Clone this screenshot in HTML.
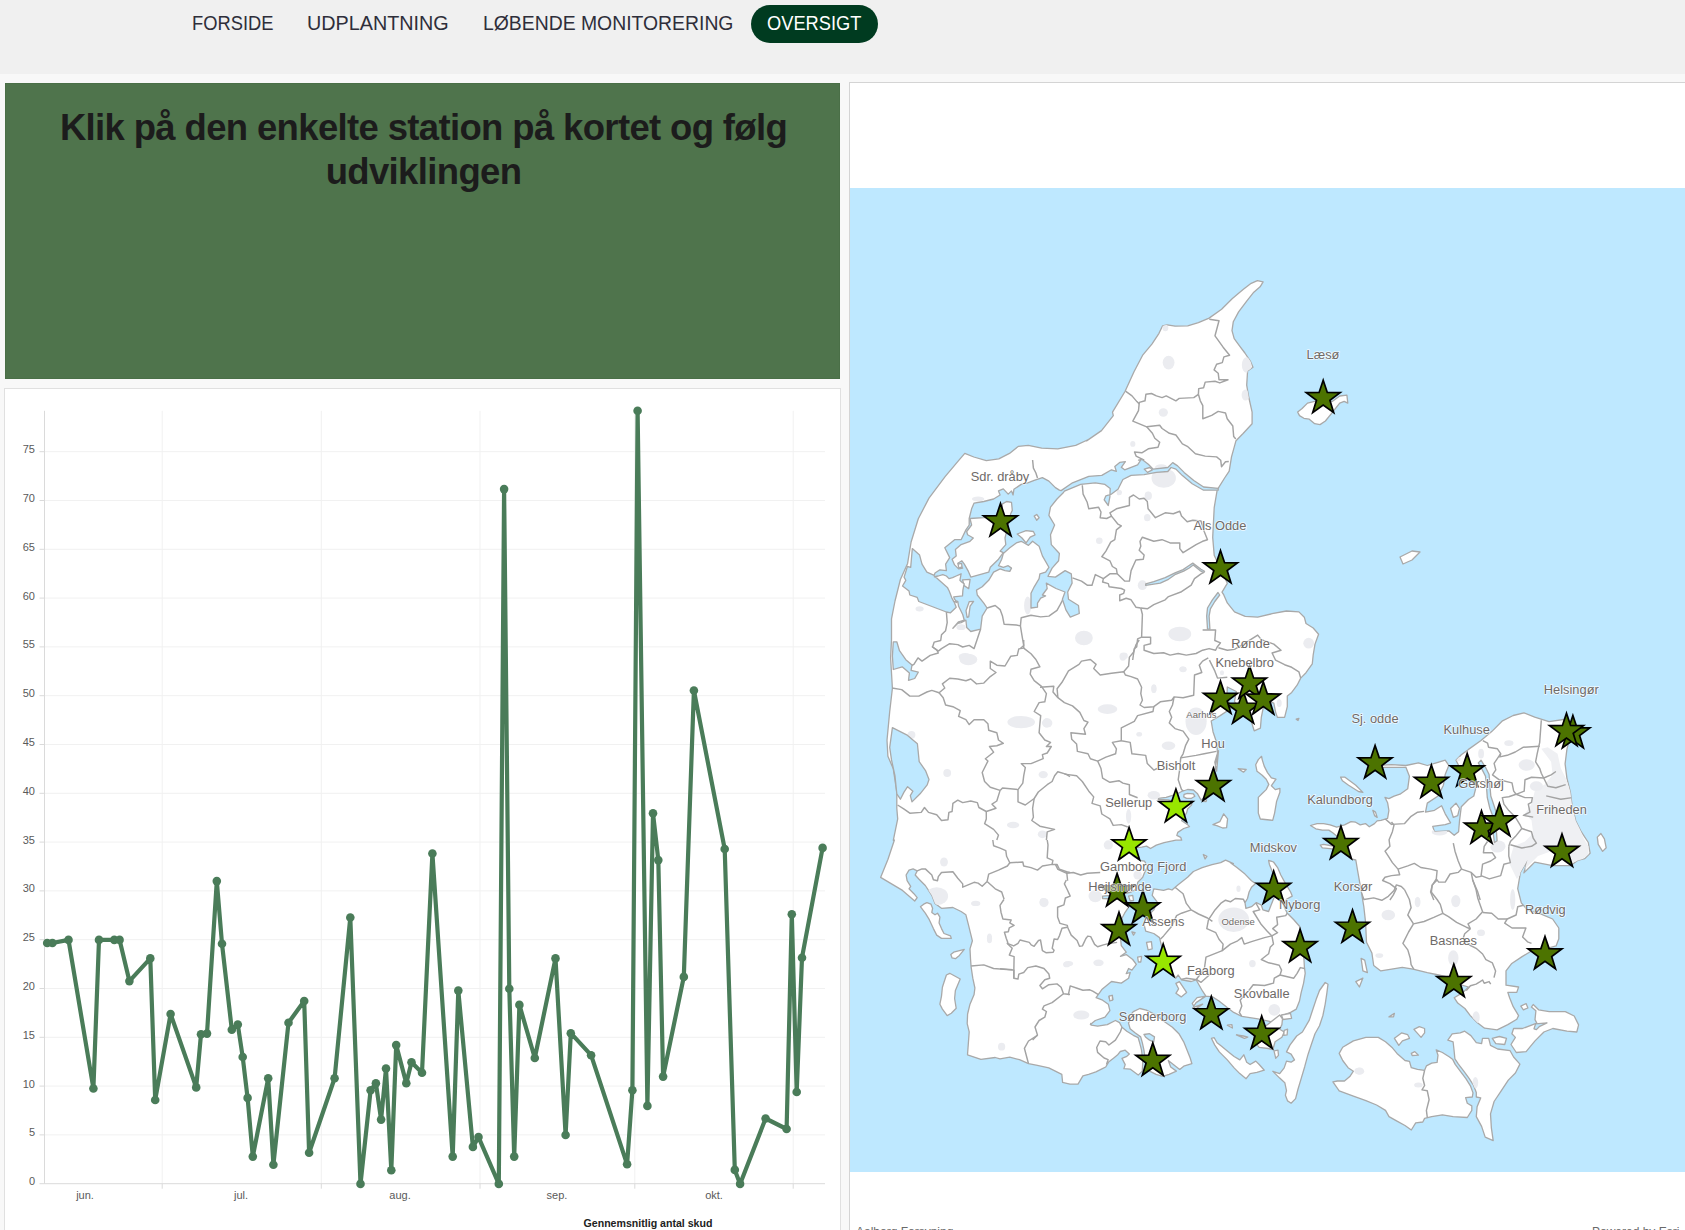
<!DOCTYPE html><html lang="da"><head><meta charset="utf-8"><title>Oversigt</title><style>
html,body{margin:0;padding:0}
body{width:1685px;height:1230px;overflow:hidden;background:#f8f8f8;font-family:"Liberation Sans",sans-serif;position:relative}
.hdr{position:absolute;left:0;top:0;width:1685px;height:74px;background:#f0f0f0}
.nav{position:absolute;top:5px;height:38px;line-height:35px;font-size:20.5px;color:#2e2e3a;white-space:nowrap}
.nav span{display:inline-block;transform-origin:0 50%}
.nav.act{background:#003b20;color:#fff;border-radius:19px}
.green{position:absolute;left:5px;top:83px;width:835px;height:296px;background:#4f744c;box-sizing:border-box;border:1px solid #4a6f47}
.green h1{margin:0;position:absolute;left:0;top:22px;width:835px;text-align:center;font-size:36.5px;line-height:44px;font-weight:bold;color:#1c1c1c;letter-spacing:-0.65px}
.cpanel{position:absolute;left:4px;top:388px;width:837px;height:860px;background:#fff;border:1px solid #e0e0e0;box-sizing:border-box;overflow:hidden}
.mpanel{position:absolute;left:849px;top:82px;width:850px;height:1170px;background:#fff;border:1px solid #d4d4d4;box-sizing:border-box;overflow:hidden}
.ax{font-size:11px;fill:#5a5a5a;font-family:"Liberation Sans",sans-serif}
.leg{font-size:10.6px;font-weight:bold;fill:#222;font-family:"Liberation Sans",sans-serif}
.ml{font-size:12.85px;fill:#6e6a68;font-family:"Liberation Sans",sans-serif;stroke:#fff;stroke-width:1.6px;stroke-opacity:.75;paint-order:stroke;stroke-linejoin:round}
.ms{font-size:9.5px;fill:#6e6a68;font-family:"Liberation Sans",sans-serif;stroke:#fff;stroke-width:1.4px;stroke-opacity:.7;paint-order:stroke;stroke-linejoin:round}
.foot{position:absolute;top:1142px;font-size:12px;color:#6a6a6a;white-space:nowrap}
</style></head><body>
<div class="hdr">
<div class="nav" style="left:191.5px"><span style="transform:scaleX(0.895)">FORSIDE</span></div>
<div class="nav" style="left:307px"><span style="transform:scaleX(0.964)">UDPLANTNING</span></div>
<div class="nav" style="left:483px"><span style="transform:scaleX(0.945)">LØBENDE MONITORERING</span></div>
<div class="nav act" style="left:751px;width:127px"><span style="transform:scaleX(0.891);margin-left:16.4px">OVERSIGT</span></div>
</div>
<div class="green"><h1>Klik på den enkelte station på kortet og følg<br>udviklingen</h1></div>
<div class="cpanel"><svg class="chart" width="835" height="842" viewBox="5 389 835 842" style="position:absolute;left:0;top:0"><line x1="44.5" y1="1134.9" x2="825" y2="1134.9" stroke="#f1f1f1" stroke-width="1"/>
<line x1="44.5" y1="1086.1" x2="825" y2="1086.1" stroke="#f1f1f1" stroke-width="1"/>
<line x1="44.5" y1="1037.3" x2="825" y2="1037.3" stroke="#f1f1f1" stroke-width="1"/>
<line x1="44.5" y1="988.5" x2="825" y2="988.5" stroke="#f1f1f1" stroke-width="1"/>
<line x1="44.5" y1="939.7" x2="825" y2="939.7" stroke="#f1f1f1" stroke-width="1"/>
<line x1="44.5" y1="890.9" x2="825" y2="890.9" stroke="#f1f1f1" stroke-width="1"/>
<line x1="44.5" y1="842.1" x2="825" y2="842.1" stroke="#f1f1f1" stroke-width="1"/>
<line x1="44.5" y1="793.3" x2="825" y2="793.3" stroke="#f1f1f1" stroke-width="1"/>
<line x1="44.5" y1="744.5" x2="825" y2="744.5" stroke="#f1f1f1" stroke-width="1"/>
<line x1="44.5" y1="695.7" x2="825" y2="695.7" stroke="#f1f1f1" stroke-width="1"/>
<line x1="44.5" y1="646.9" x2="825" y2="646.9" stroke="#f1f1f1" stroke-width="1"/>
<line x1="44.5" y1="598.1" x2="825" y2="598.1" stroke="#f1f1f1" stroke-width="1"/>
<line x1="44.5" y1="549.3" x2="825" y2="549.3" stroke="#f1f1f1" stroke-width="1"/>
<line x1="44.5" y1="500.5" x2="825" y2="500.5" stroke="#f1f1f1" stroke-width="1"/>
<line x1="44.5" y1="451.7" x2="825" y2="451.7" stroke="#f1f1f1" stroke-width="1"/>
<line x1="162.2" y1="410.8" x2="162.2" y2="1183.7" stroke="#f1f1f1" stroke-width="1"/>
<line x1="162.2" y1="1183.7" x2="162.2" y2="1188.7" stroke="#dadada" stroke-width="1"/>
<line x1="321.3" y1="410.8" x2="321.3" y2="1183.7" stroke="#f1f1f1" stroke-width="1"/>
<line x1="321.3" y1="1183.7" x2="321.3" y2="1188.7" stroke="#dadada" stroke-width="1"/>
<line x1="480" y1="410.8" x2="480" y2="1183.7" stroke="#f1f1f1" stroke-width="1"/>
<line x1="480" y1="1183.7" x2="480" y2="1188.7" stroke="#dadada" stroke-width="1"/>
<line x1="634.8" y1="410.8" x2="634.8" y2="1183.7" stroke="#f1f1f1" stroke-width="1"/>
<line x1="634.8" y1="1183.7" x2="634.8" y2="1188.7" stroke="#dadada" stroke-width="1"/>
<line x1="793.2" y1="410.8" x2="793.2" y2="1183.7" stroke="#f1f1f1" stroke-width="1"/>
<line x1="793.2" y1="1183.7" x2="793.2" y2="1188.7" stroke="#dadada" stroke-width="1"/>
<line x1="44.5" y1="410.8" x2="44.5" y2="1183.7" stroke="#dadada" stroke-width="1"/>
<line x1="44.5" y1="1183.7" x2="825" y2="1183.7" stroke="#dadada" stroke-width="1"/>
<line x1="39.5" y1="1183.7" x2="44.5" y2="1183.7" stroke="#dadada" stroke-width="1"/>
<text x="35" y="1185.2" text-anchor="end" class="ax">0</text>
<line x1="39.5" y1="1134.9" x2="44.5" y2="1134.9" stroke="#dadada" stroke-width="1"/>
<text x="35" y="1136.4" text-anchor="end" class="ax">5</text>
<line x1="39.5" y1="1086.1" x2="44.5" y2="1086.1" stroke="#dadada" stroke-width="1"/>
<text x="35" y="1087.6" text-anchor="end" class="ax">10</text>
<line x1="39.5" y1="1037.3" x2="44.5" y2="1037.3" stroke="#dadada" stroke-width="1"/>
<text x="35" y="1038.8" text-anchor="end" class="ax">15</text>
<line x1="39.5" y1="988.5" x2="44.5" y2="988.5" stroke="#dadada" stroke-width="1"/>
<text x="35" y="990.0" text-anchor="end" class="ax">20</text>
<line x1="39.5" y1="939.7" x2="44.5" y2="939.7" stroke="#dadada" stroke-width="1"/>
<text x="35" y="941.2" text-anchor="end" class="ax">25</text>
<line x1="39.5" y1="890.9" x2="44.5" y2="890.9" stroke="#dadada" stroke-width="1"/>
<text x="35" y="892.4" text-anchor="end" class="ax">30</text>
<line x1="39.5" y1="842.1" x2="44.5" y2="842.1" stroke="#dadada" stroke-width="1"/>
<text x="35" y="843.6" text-anchor="end" class="ax">35</text>
<line x1="39.5" y1="793.3" x2="44.5" y2="793.3" stroke="#dadada" stroke-width="1"/>
<text x="35" y="794.8" text-anchor="end" class="ax">40</text>
<line x1="39.5" y1="744.5" x2="44.5" y2="744.5" stroke="#dadada" stroke-width="1"/>
<text x="35" y="746.0" text-anchor="end" class="ax">45</text>
<line x1="39.5" y1="695.7" x2="44.5" y2="695.7" stroke="#dadada" stroke-width="1"/>
<text x="35" y="697.2" text-anchor="end" class="ax">50</text>
<line x1="39.5" y1="646.9" x2="44.5" y2="646.9" stroke="#dadada" stroke-width="1"/>
<text x="35" y="648.4" text-anchor="end" class="ax">55</text>
<line x1="39.5" y1="598.1" x2="44.5" y2="598.1" stroke="#dadada" stroke-width="1"/>
<text x="35" y="599.6" text-anchor="end" class="ax">60</text>
<line x1="39.5" y1="549.3" x2="44.5" y2="549.3" stroke="#dadada" stroke-width="1"/>
<text x="35" y="550.8" text-anchor="end" class="ax">65</text>
<line x1="39.5" y1="500.5" x2="44.5" y2="500.5" stroke="#dadada" stroke-width="1"/>
<text x="35" y="502.0" text-anchor="end" class="ax">70</text>
<line x1="39.5" y1="451.7" x2="44.5" y2="451.7" stroke="#dadada" stroke-width="1"/>
<text x="35" y="453.2" text-anchor="end" class="ax">75</text>
<text x="85" y="1198.5" text-anchor="middle" class="ax">jun.</text>
<text x="241" y="1198.5" text-anchor="middle" class="ax">jul.</text>
<text x="400" y="1198.5" text-anchor="middle" class="ax">aug.</text>
<text x="557" y="1198.5" text-anchor="middle" class="ax">sep.</text>
<text x="714" y="1198.5" text-anchor="middle" class="ax">okt.</text>
<path d="M47.2,943.0 L52.4,943.0 L68.5,939.9 L93.4,1088.5 L99.0,939.9 L114.3,939.9 L119.6,939.9 L129.4,981.1 L150.3,958.4 L155.2,1100.0 L170.6,1014.0 L196.2,1087.4 L201.0,1034.3 L207.0,1033.6 L216.8,881.1 L222.0,943.7 L231.8,1029.7 L237.8,1024.5 L242.7,1057.0 L247.6,1097.9 L252.8,1156.6 L268.2,1078.3 L273.4,1164.7 L288.5,1022.7 L304.2,1001.0 L309.1,1152.8 L334.6,1078.3 L350.3,917.5 L360.5,1183.9 L370.6,1090.2 L375.9,1083.2 L381.1,1119.6 L386.0,1068.5 L391.3,1170.3 L396.2,1045.1 L406.3,1083.2 L411.5,1062.2 L422.0,1072.7 L432.4,853.5 L452.7,1156.6 L458.3,990.6 L472.9,1146.9 L478.5,1137.1 L498.8,1183.9 L504.1,489.1 L509.3,988.8 L514.2,1156.6 L519.4,1004.9 L534.8,1058.0 L555.5,958.4 L565.6,1135.0 L570.8,1033.2 L591.1,1055.2 L627.1,1164.3 L632.4,1090.2 L637.6,410.8 L647.4,1105.9 L653.0,813.3 L658.3,860.1 L663.1,1076.6 L683.8,976.9 L693.9,690.5 L724.7,849.0 L734.8,1169.9 L740.1,1183.9 L765.6,1118.5 L786.6,1129.0 L791.8,914.3 L796.7,1092.0 L802.0,957.7 L822.6,847.9" fill="none" stroke="#4a7c59" stroke-width="4.2" stroke-linejoin="round" stroke-linecap="round"/>
<circle cx="47.2" cy="943.0" r="4.3" fill="#4a7c59"/>
<circle cx="52.4" cy="943.0" r="4.3" fill="#4a7c59"/>
<circle cx="68.5" cy="939.9" r="4.3" fill="#4a7c59"/>
<circle cx="93.4" cy="1088.5" r="4.3" fill="#4a7c59"/>
<circle cx="99.0" cy="939.9" r="4.3" fill="#4a7c59"/>
<circle cx="114.3" cy="939.9" r="4.3" fill="#4a7c59"/>
<circle cx="119.6" cy="939.9" r="4.3" fill="#4a7c59"/>
<circle cx="129.4" cy="981.1" r="4.3" fill="#4a7c59"/>
<circle cx="150.3" cy="958.4" r="4.3" fill="#4a7c59"/>
<circle cx="155.2" cy="1100.0" r="4.3" fill="#4a7c59"/>
<circle cx="170.6" cy="1014.0" r="4.3" fill="#4a7c59"/>
<circle cx="196.2" cy="1087.4" r="4.3" fill="#4a7c59"/>
<circle cx="201.0" cy="1034.3" r="4.3" fill="#4a7c59"/>
<circle cx="207.0" cy="1033.6" r="4.3" fill="#4a7c59"/>
<circle cx="216.8" cy="881.1" r="4.3" fill="#4a7c59"/>
<circle cx="222.0" cy="943.7" r="4.3" fill="#4a7c59"/>
<circle cx="231.8" cy="1029.7" r="4.3" fill="#4a7c59"/>
<circle cx="237.8" cy="1024.5" r="4.3" fill="#4a7c59"/>
<circle cx="242.7" cy="1057.0" r="4.3" fill="#4a7c59"/>
<circle cx="247.6" cy="1097.9" r="4.3" fill="#4a7c59"/>
<circle cx="252.8" cy="1156.6" r="4.3" fill="#4a7c59"/>
<circle cx="268.2" cy="1078.3" r="4.3" fill="#4a7c59"/>
<circle cx="273.4" cy="1164.7" r="4.3" fill="#4a7c59"/>
<circle cx="288.5" cy="1022.7" r="4.3" fill="#4a7c59"/>
<circle cx="304.2" cy="1001.0" r="4.3" fill="#4a7c59"/>
<circle cx="309.1" cy="1152.8" r="4.3" fill="#4a7c59"/>
<circle cx="334.6" cy="1078.3" r="4.3" fill="#4a7c59"/>
<circle cx="350.3" cy="917.5" r="4.3" fill="#4a7c59"/>
<circle cx="360.5" cy="1183.9" r="4.3" fill="#4a7c59"/>
<circle cx="370.6" cy="1090.2" r="4.3" fill="#4a7c59"/>
<circle cx="375.9" cy="1083.2" r="4.3" fill="#4a7c59"/>
<circle cx="381.1" cy="1119.6" r="4.3" fill="#4a7c59"/>
<circle cx="386.0" cy="1068.5" r="4.3" fill="#4a7c59"/>
<circle cx="391.3" cy="1170.3" r="4.3" fill="#4a7c59"/>
<circle cx="396.2" cy="1045.1" r="4.3" fill="#4a7c59"/>
<circle cx="406.3" cy="1083.2" r="4.3" fill="#4a7c59"/>
<circle cx="411.5" cy="1062.2" r="4.3" fill="#4a7c59"/>
<circle cx="422.0" cy="1072.7" r="4.3" fill="#4a7c59"/>
<circle cx="432.4" cy="853.5" r="4.3" fill="#4a7c59"/>
<circle cx="452.7" cy="1156.6" r="4.3" fill="#4a7c59"/>
<circle cx="458.3" cy="990.6" r="4.3" fill="#4a7c59"/>
<circle cx="472.9" cy="1146.9" r="4.3" fill="#4a7c59"/>
<circle cx="478.5" cy="1137.1" r="4.3" fill="#4a7c59"/>
<circle cx="498.8" cy="1183.9" r="4.3" fill="#4a7c59"/>
<circle cx="504.1" cy="489.1" r="4.3" fill="#4a7c59"/>
<circle cx="509.3" cy="988.8" r="4.3" fill="#4a7c59"/>
<circle cx="514.2" cy="1156.6" r="4.3" fill="#4a7c59"/>
<circle cx="519.4" cy="1004.9" r="4.3" fill="#4a7c59"/>
<circle cx="534.8" cy="1058.0" r="4.3" fill="#4a7c59"/>
<circle cx="555.5" cy="958.4" r="4.3" fill="#4a7c59"/>
<circle cx="565.6" cy="1135.0" r="4.3" fill="#4a7c59"/>
<circle cx="570.8" cy="1033.2" r="4.3" fill="#4a7c59"/>
<circle cx="591.1" cy="1055.2" r="4.3" fill="#4a7c59"/>
<circle cx="627.1" cy="1164.3" r="4.3" fill="#4a7c59"/>
<circle cx="632.4" cy="1090.2" r="4.3" fill="#4a7c59"/>
<circle cx="637.6" cy="410.8" r="4.3" fill="#4a7c59"/>
<circle cx="647.4" cy="1105.9" r="4.3" fill="#4a7c59"/>
<circle cx="653.0" cy="813.3" r="4.3" fill="#4a7c59"/>
<circle cx="658.3" cy="860.1" r="4.3" fill="#4a7c59"/>
<circle cx="663.1" cy="1076.6" r="4.3" fill="#4a7c59"/>
<circle cx="683.8" cy="976.9" r="4.3" fill="#4a7c59"/>
<circle cx="693.9" cy="690.5" r="4.3" fill="#4a7c59"/>
<circle cx="724.7" cy="849.0" r="4.3" fill="#4a7c59"/>
<circle cx="734.8" cy="1169.9" r="4.3" fill="#4a7c59"/>
<circle cx="740.1" cy="1183.9" r="4.3" fill="#4a7c59"/>
<circle cx="765.6" cy="1118.5" r="4.3" fill="#4a7c59"/>
<circle cx="786.6" cy="1129.0" r="4.3" fill="#4a7c59"/>
<circle cx="791.8" cy="914.3" r="4.3" fill="#4a7c59"/>
<circle cx="796.7" cy="1092.0" r="4.3" fill="#4a7c59"/>
<circle cx="802.0" cy="957.7" r="4.3" fill="#4a7c59"/>
<circle cx="822.6" cy="847.9" r="4.3" fill="#4a7c59"/>
<text x="648" y="1227" text-anchor="middle" class="leg">Gennemsnitlig antal skud</text></svg></div>
<div class="mpanel"><svg class="map" width="835" height="984" viewBox="850 188 835 984" style="position:absolute;left:0;top:105px"><rect x="850" y="188" width="835" height="984" fill="#bee8ff"/>
<defs><clipPath id="landclip">
<path d="M1263.1,281.8 L1260.1,286.8 L1253.8,292.2 L1246.7,301.1 L1238.6,311.9 L1233.3,321.7 L1232.0,330.7 L1234.2,338.7 L1239.5,345.9 L1244.9,353.0 L1250.3,361.1 L1253.0,367.3 L1247.6,370.9 L1246.7,385.2 L1248.5,396.0 L1252.1,412.1 L1252.1,423.7 L1243.1,433.5 L1236.0,440.7 L1231.5,456.8 L1229.2,471.1 L1224.6,478.0 L1217.2,489.9 L1214.2,507.7 L1212.7,537.4 L1214.2,555.2 L1227.3,583.3 L1222.0,592.2 L1223.8,594.9 L1227.3,602.9 L1234.5,611.9 L1245.2,616.4 L1257.7,617.2 L1272.1,613.7 L1286.4,611.0 L1298.9,611.9 L1304.3,617.2 L1306.0,623.5 L1313.2,628.0 L1318.6,634.2 L1315.0,644.1 L1313.2,654.8 L1312.3,663.8 L1306.0,672.7 L1300.7,678.1 L1297.1,685.2 L1291.7,692.4 L1287.3,696.0 L1287.3,706.7 L1284.6,717.4 L1277.4,717.4 L1275.6,712.1 L1273.8,703.1 L1268.5,701.3 L1263.1,708.5 L1261.3,717.4 L1260.4,728.2 L1254.2,730.8 L1250.6,719.2 L1245.2,712.1 L1238.1,708.5 L1234.5,701.3 L1236.3,691.5 L1227.3,687.0 L1227.0,696.0 L1230.9,708.5 L1220.2,715.6 L1211.2,721.0 L1213.0,731.7 L1216.6,742.5 L1217.5,753.2 L1214.8,762.1 L1216.6,771.1 L1218.5,750.7 L1215.8,763.3 L1213.1,779.4 L1206.0,795.5 L1201.2,800.2 L1197.3,793.4 L1193.4,790.0 L1187.6,789.5 L1181.7,791.5 L1175.9,794.4 L1166.1,797.3 L1158.3,798.3 L1158.3,799.5 L1168.0,799.8 L1177.8,802.2 L1187.6,802.2 L1192.4,801.2 L1191.5,805.1 L1187.6,809.0 L1186.6,812.9 L1181.7,820.7 L1187.6,824.6 L1189.5,826.6 L1183.7,828.5 L1177.8,832.4 L1176.8,835.4 L1180.7,837.3 L1181.7,840.2 L1175.9,840.2 L1164.1,842.7 L1156.3,845.1 L1150.5,848.5 L1146.6,846.1 L1141.7,847.1 L1132.9,848.0 L1129.0,851.0 L1132.9,855.9 L1140.7,860.7 L1144.6,861.2 L1147.6,866.6 L1144.6,872.4 L1142.7,877.3 L1137.8,882.2 L1136.8,887.1 L1136.7,888.8 L1131.1,892.0 L1121.3,894.5 L1111.5,895.3 L1102.6,896.1 L1102.6,898.5 L1111.5,898.9 L1121.3,899.7 L1128.6,902.6 L1131.1,904.2 L1127.8,908.3 L1124.6,913.2 L1122.1,918.0 L1119.7,927.8 L1120.5,937.6 L1121.3,945.7 L1126.2,952.2 L1120.5,956.3 L1126.2,954.6 L1132.7,959.5 L1136.3,964.4 L1131.9,970.1 L1128.6,968.5 L1126.2,973.7 L1130.2,972.5 L1128.6,978.2 L1121.3,983.1 L1111.5,981.5 L1101.8,989.6 L1096.1,997.7 L1102.6,1000.2 L1108.3,1004.2 L1109.9,1010.7 L1105.0,1017.2 L1095.3,1020.5 L1090.4,1024.6 L1090.7,1023.3 L1091.4,1025.2 L1097.6,1026.2 L1107.3,1024.6 L1115.4,1020.5 L1119.5,1022.6 L1122.0,1027.2 L1126.8,1031.2 L1133.3,1035.3 L1138.2,1037.7 L1139.8,1043.4 L1141.5,1049.9 L1142.8,1061.3 L1142.3,1071.1 L1138.2,1075.1 L1130.1,1069.1 L1123.9,1068.6 L1125.2,1064.6 L1122.0,1058.4 L1126.8,1056.4 L1129.3,1054.0 L1125.2,1050.2 L1120.3,1051.5 L1117.4,1055.1 L1113.8,1058.0 L1108.6,1062.1 L1105.7,1067.0 L1102.4,1068.6 L1095.9,1071.9 L1088.6,1074.3 L1082.9,1075.9 L1078.0,1084.1 L1069.9,1084.1 L1062.6,1082.4 L1061.8,1074.3 L1048.8,1067.8 L1037.4,1065.4 L1028.5,1063.7 L1019.5,1059.7 L1009.8,1057.2 L1000.0,1058.9 L995.2,1057.5 L980.9,1059.3 L967.5,1054.8 L969.2,1031.9 L967.2,1023.7 L967.6,1014.0 L970.0,1004.2 L974.1,994.5 L974.9,988.0 L972.8,978.2 L971.1,966.8 L970.5,958.7 L970.0,948.9 L972.4,940.8 L970.8,934.3 L968.4,924.6 L965.9,914.8 L961.1,911.5 L952.9,907.5 L941.5,908.3 L935.0,903.4 L931.8,895.3 L925.3,885.5 L918.8,879.0 L915.2,875.0 L917.2,870.9 L913.1,868.9 L909.0,870.1 L906.1,875.0 L907.1,880.7 L910.7,886.3 L909.0,888.8 L913.9,893.7 L917.2,897.7 L914.7,901.0 L902.5,890.4 L880.6,877.4 L887.9,859.5 L894.4,840.0 L893.3,840.4 L897.7,818.9 L896.8,808.2 L896.8,792.1 L893.3,768.8 L887.9,756.3 L887.0,740.2 L889.7,711.6 L892.4,688.3 L890.6,657.9 L891.5,640.0 L891.5,640.4 L891.5,618.9 L895.0,601.0 L900.4,579.5 L907.6,563.4 L911.1,542.0 L918.3,518.7 L929.0,498.1 L945.1,476.7 L959.4,459.7 L964.8,453.4 L973.8,457.0 L986.3,460.6 L998.8,458.8 L1009.5,453.4 L1018.5,446.3 L1028.3,445.4 L1041.7,448.1 L1057.8,448.9 L1075.7,445.4 L1087.4,440.0 L1086.6,440.9 L1101.5,430.6 L1113.3,415.7 L1112.5,412.1 L1125.0,391.5 L1134.0,371.8 L1142.9,354.8 L1151.9,344.1 L1159.0,333.3 L1162.6,325.8 L1167.1,324.8 L1175.1,326.2 L1187.7,325.8 L1198.4,322.6 L1209.1,318.1 L1221.6,309.2 L1232.4,298.5 L1243.1,289.5 L1251.2,283.3 L1257.4,280.6Z"/>
<path d="M1172.0,890.0 L1177.8,885.1 L1187.6,877.3 L1193.4,871.5 L1202.2,867.6 L1212.0,864.6 L1220.7,862.7 L1225.6,860.2 L1233.4,863.7 L1230.4,862.8 L1236.9,867.6 L1245.0,874.1 L1251.5,880.7 L1255.6,883.6 L1251.5,887.2 L1249.1,892.0 L1247.5,898.5 L1245.0,902.6 L1245.9,908.3 L1251.5,906.7 L1256.4,902.6 L1261.3,905.0 L1262.9,909.9 L1268.6,911.5 L1271.1,905.0 L1274.3,896.9 L1277.6,888.8 L1275.9,880.7 L1272.7,872.5 L1269.4,864.4 L1268.6,860.3 L1273.5,862.0 L1277.6,867.6 L1280.8,875.0 L1285.7,883.9 L1290.6,892.0 L1292.2,896.1 L1286.5,899.3 L1284.1,906.7 L1287.3,913.2 L1293.8,919.7 L1299.5,926.2 L1302.0,937.6 L1303.6,953.8 L1304.4,966.8 L1305.2,973.3 L1303.6,983.1 L1301.1,992.8 L1299.5,1001.0 L1296.3,1009.1 L1290.6,1012.4 L1284.1,1014.8 L1277.6,1017.2 L1272.7,1022.1 L1258.0,1018.9 L1241.8,1016.4 L1233.7,1012.4 L1227.2,1007.5 L1219.0,1001.0 L1212.5,996.9 L1206.0,996.1 L1197.1,997.7 L1192.2,1003.4 L1195.4,1009.1 L1202.6,1004.2 L1192.8,1007.5 L1196.1,1002.6 L1205.9,996.1 L1202.6,991.2 L1196.1,979.8 L1191.2,981.5 L1181.5,979.8 L1178.2,975.0 L1175.8,978.2 L1170.1,970.1 L1163.6,953.8 L1161.1,944.1 L1159.5,937.6 L1153.8,933.5 L1145.7,931.1 L1144.1,924.6 L1145.7,918.0 L1153.8,909.9 L1157.1,901.8 L1152.2,895.3 L1153.8,888.8 L1163.6,890.4 L1168.5,888.8Z"/>
<path d="M1375.5,765.5 L1391.6,764.7 L1405.9,765.5 L1418.4,762.9 L1427.3,765.5 L1436.3,762.9 L1445.2,760.2 L1448.8,765.5 L1445.2,774.5 L1443.4,785.2 L1438.1,796.0 L1427.3,803.1 L1425.5,812.1 L1434.5,810.3 L1441.6,805.8 L1445.2,813.8 L1450.6,822.8 L1445.2,824.6 L1432.7,826.4 L1434.5,831.7 L1448.8,830.8 L1454.2,835.3 L1458.6,831.7 L1459.5,821.0 L1461.3,806.7 L1468.5,799.5 L1473.8,796.0 L1475.6,788.8 L1472.1,778.1 L1463.1,774.5 L1456.0,760.2 L1461.3,754.8 L1468.5,749.4 L1481.0,740.5 L1491.7,731.6 L1502.5,720.8 L1513.2,715.5 L1523.9,712.8 L1534.7,717.2 L1549.0,721.7 L1566.9,719.0 L1570.4,735.1 L1566.9,749.4 L1565.1,763.8 L1566.9,778.1 L1570.4,792.4 L1572.2,806.7 L1575.8,821.0 L1581.2,831.7 L1588.3,842.5 L1590.1,853.2 L1584.8,858.6 L1577.6,860.4 L1570.4,865.7 L1552.6,865.7 L1534.7,862.1 L1531.1,865.7 L1523.9,872.9 L1527.5,860.0 L1520.4,872.5 L1517.7,888.6 L1521.3,902.9 L1527.5,910.1 L1540.0,913.7 L1552.6,919.0 L1558.8,928.0 L1558.8,938.7 L1556.1,945.9 L1543.6,949.4 L1531.1,951.2 L1522.1,956.6 L1511.4,963.8 L1506.0,970.9 L1506.0,985.2 L1518.6,987.0 L1516.8,992.4 L1507.8,992.4 L1509.6,997.7 L1513.2,1006.7 L1518.6,1015.6 L1516.8,1019.2 L1507.8,1024.6 L1497.1,1029.9 L1484.6,1028.2 L1477.4,1022.8 L1470.3,1015.6 L1464.9,1008.5 L1457.7,1003.1 L1454.2,997.7 L1463.1,992.4 L1468.5,987.0 L1456.0,983.4 L1445.2,976.3 L1436.3,974.5 L1427.3,972.7 L1413.0,969.1 L1402.3,967.3 L1391.6,969.1 L1380.8,970.9 L1373.7,965.5 L1371.9,953.0 L1366.5,942.3 L1365.6,922.6 L1363.8,906.5 L1361.1,890.4 L1357.6,870.7 L1355.8,860.0 L1351.0,858.8 L1347.1,854.9 L1343.2,851.0 L1330.1,848.6 L1322.3,847.8 L1320.3,845.1 L1323.6,844.3 L1330.1,845.5 L1336.7,846.4 L1344.5,843.1 L1343.2,839.2 L1336.7,836.0 L1332.7,832.7 L1328.8,830.1 L1322.3,830.1 L1315.8,828.8 L1310.5,825.5 L1317.1,823.6 L1323.6,823.6 L1330.1,824.9 L1336.7,827.2 L1344.5,824.9 L1351.0,821.6 L1355.6,822.2 L1360.2,824.9 L1365.4,823.6 L1369.3,826.8 L1374.5,823.6 L1377.1,820.9 L1381.0,820.3 L1387.6,818.3 L1388.9,810.5 L1387.6,802.7 L1385.0,797.4 L1388.9,798.7 L1394.1,796.1 L1400.0,794.2 L1407.7,788.8 L1409.4,776.3 L1405.9,767.3 L1391.6,767.3 L1375.5,767.3Z"/>
<path d="M1339.2,1053.4 L1342.7,1047.2 L1353.4,1040.9 L1365.9,1037.4 L1378.3,1037.4 L1385.5,1041.8 L1392.6,1048.1 L1397.0,1053.4 L1405.0,1060.5 L1409.5,1061.4 L1411.3,1067.7 L1417.5,1069.4 L1424.6,1070.3 L1426.4,1065.9 L1431.7,1063.2 L1437.1,1062.3 L1438.0,1055.2 L1436.2,1049.8 L1442.4,1052.5 L1449.5,1057.0 L1452.8,1059.6 L1455.2,1064.4 L1460.6,1071.6 L1465.9,1078.7 L1470.4,1085.8 L1473.0,1092.9 L1472.3,1097.0 L1465.6,1097.6 L1467.3,1103.3 L1471.8,1105.9 L1471.8,1110.4 L1467.3,1117.5 L1453.1,1116.6 L1442.4,1114.8 L1431.7,1116.6 L1424.6,1118.4 L1422.8,1122.0 L1415.7,1122.8 L1411.3,1130.0 L1405.0,1125.5 L1397.0,1121.1 L1389.0,1116.6 L1385.5,1110.4 L1376.6,1105.0 L1365.9,1100.6 L1353.4,1096.1 L1339.2,1090.8 L1332.9,1081.9 L1337.4,1081.0 L1344.5,1081.0 L1349.8,1076.6 L1353.4,1071.2 L1348.1,1067.7 L1342.7,1060.5Z"/>
<path d="M1447.8,1040.1 L1452.2,1033.8 L1460.2,1032.9 L1464.7,1031.2 L1470.9,1035.6 L1476.3,1042.7 L1481.6,1043.6 L1482.5,1038.3 L1488.7,1038.3 L1490.5,1045.4 L1497.6,1049.0 L1510.1,1050.7 L1513.6,1057.0 L1519.9,1064.1 L1515.4,1073.0 L1508.3,1080.1 L1501.2,1090.8 L1494.1,1101.5 L1490.5,1113.9 L1491.4,1128.2 L1493.2,1140.6 L1485.2,1137.1 L1481.6,1126.4 L1476.3,1116.6 L1477.1,1106.8 L1480.7,1097.9 L1476.3,1097.0 L1476.3,1092.6 L1473.6,1085.5 L1469.1,1078.3 L1463.8,1071.2 L1458.4,1064.1 L1454.9,1058.8 L1454.0,1049.8 L1453.1,1041.8Z"/>
<path d="M1511.9,1033.8 L1513.6,1028.5 L1522.5,1028.5 L1536.8,1023.1 L1535.0,1019.6 L1535.9,1010.7 L1531.4,1007.1 L1533.2,1004.5 L1538.6,1009.8 L1549.2,1011.6 L1565.3,1011.6 L1574.2,1016.0 L1578.6,1024.9 L1576.8,1032.0 L1567.0,1031.2 L1552.8,1028.5 L1543.9,1032.0 L1535.0,1040.9 L1526.1,1051.6 L1516.3,1052.5 L1511.0,1044.5 L1515.4,1037.4Z"/>
</clipPath></defs>
<path d="M1263.1,281.8 L1260.1,286.8 L1253.8,292.2 L1246.7,301.1 L1238.6,311.9 L1233.3,321.7 L1232.0,330.7 L1234.2,338.7 L1239.5,345.9 L1244.9,353.0 L1250.3,361.1 L1253.0,367.3 L1247.6,370.9 L1246.7,385.2 L1248.5,396.0 L1252.1,412.1 L1252.1,423.7 L1243.1,433.5 L1236.0,440.7 L1231.5,456.8 L1229.2,471.1 L1224.6,478.0 L1217.2,489.9 L1214.2,507.7 L1212.7,537.4 L1214.2,555.2 L1227.3,583.3 L1222.0,592.2 L1223.8,594.9 L1227.3,602.9 L1234.5,611.9 L1245.2,616.4 L1257.7,617.2 L1272.1,613.7 L1286.4,611.0 L1298.9,611.9 L1304.3,617.2 L1306.0,623.5 L1313.2,628.0 L1318.6,634.2 L1315.0,644.1 L1313.2,654.8 L1312.3,663.8 L1306.0,672.7 L1300.7,678.1 L1297.1,685.2 L1291.7,692.4 L1287.3,696.0 L1287.3,706.7 L1284.6,717.4 L1277.4,717.4 L1275.6,712.1 L1273.8,703.1 L1268.5,701.3 L1263.1,708.5 L1261.3,717.4 L1260.4,728.2 L1254.2,730.8 L1250.6,719.2 L1245.2,712.1 L1238.1,708.5 L1234.5,701.3 L1236.3,691.5 L1227.3,687.0 L1227.0,696.0 L1230.9,708.5 L1220.2,715.6 L1211.2,721.0 L1213.0,731.7 L1216.6,742.5 L1217.5,753.2 L1214.8,762.1 L1216.6,771.1 L1218.5,750.7 L1215.8,763.3 L1213.1,779.4 L1206.0,795.5 L1201.2,800.2 L1197.3,793.4 L1193.4,790.0 L1187.6,789.5 L1181.7,791.5 L1175.9,794.4 L1166.1,797.3 L1158.3,798.3 L1158.3,799.5 L1168.0,799.8 L1177.8,802.2 L1187.6,802.2 L1192.4,801.2 L1191.5,805.1 L1187.6,809.0 L1186.6,812.9 L1181.7,820.7 L1187.6,824.6 L1189.5,826.6 L1183.7,828.5 L1177.8,832.4 L1176.8,835.4 L1180.7,837.3 L1181.7,840.2 L1175.9,840.2 L1164.1,842.7 L1156.3,845.1 L1150.5,848.5 L1146.6,846.1 L1141.7,847.1 L1132.9,848.0 L1129.0,851.0 L1132.9,855.9 L1140.7,860.7 L1144.6,861.2 L1147.6,866.6 L1144.6,872.4 L1142.7,877.3 L1137.8,882.2 L1136.8,887.1 L1136.7,888.8 L1131.1,892.0 L1121.3,894.5 L1111.5,895.3 L1102.6,896.1 L1102.6,898.5 L1111.5,898.9 L1121.3,899.7 L1128.6,902.6 L1131.1,904.2 L1127.8,908.3 L1124.6,913.2 L1122.1,918.0 L1119.7,927.8 L1120.5,937.6 L1121.3,945.7 L1126.2,952.2 L1120.5,956.3 L1126.2,954.6 L1132.7,959.5 L1136.3,964.4 L1131.9,970.1 L1128.6,968.5 L1126.2,973.7 L1130.2,972.5 L1128.6,978.2 L1121.3,983.1 L1111.5,981.5 L1101.8,989.6 L1096.1,997.7 L1102.6,1000.2 L1108.3,1004.2 L1109.9,1010.7 L1105.0,1017.2 L1095.3,1020.5 L1090.4,1024.6 L1090.7,1023.3 L1091.4,1025.2 L1097.6,1026.2 L1107.3,1024.6 L1115.4,1020.5 L1119.5,1022.6 L1122.0,1027.2 L1126.8,1031.2 L1133.3,1035.3 L1138.2,1037.7 L1139.8,1043.4 L1141.5,1049.9 L1142.8,1061.3 L1142.3,1071.1 L1138.2,1075.1 L1130.1,1069.1 L1123.9,1068.6 L1125.2,1064.6 L1122.0,1058.4 L1126.8,1056.4 L1129.3,1054.0 L1125.2,1050.2 L1120.3,1051.5 L1117.4,1055.1 L1113.8,1058.0 L1108.6,1062.1 L1105.7,1067.0 L1102.4,1068.6 L1095.9,1071.9 L1088.6,1074.3 L1082.9,1075.9 L1078.0,1084.1 L1069.9,1084.1 L1062.6,1082.4 L1061.8,1074.3 L1048.8,1067.8 L1037.4,1065.4 L1028.5,1063.7 L1019.5,1059.7 L1009.8,1057.2 L1000.0,1058.9 L995.2,1057.5 L980.9,1059.3 L967.5,1054.8 L969.2,1031.9 L967.2,1023.7 L967.6,1014.0 L970.0,1004.2 L974.1,994.5 L974.9,988.0 L972.8,978.2 L971.1,966.8 L970.5,958.7 L970.0,948.9 L972.4,940.8 L970.8,934.3 L968.4,924.6 L965.9,914.8 L961.1,911.5 L952.9,907.5 L941.5,908.3 L935.0,903.4 L931.8,895.3 L925.3,885.5 L918.8,879.0 L915.2,875.0 L917.2,870.9 L913.1,868.9 L909.0,870.1 L906.1,875.0 L907.1,880.7 L910.7,886.3 L909.0,888.8 L913.9,893.7 L917.2,897.7 L914.7,901.0 L902.5,890.4 L880.6,877.4 L887.9,859.5 L894.4,840.0 L893.3,840.4 L897.7,818.9 L896.8,808.2 L896.8,792.1 L893.3,768.8 L887.9,756.3 L887.0,740.2 L889.7,711.6 L892.4,688.3 L890.6,657.9 L891.5,640.0 L891.5,640.4 L891.5,618.9 L895.0,601.0 L900.4,579.5 L907.6,563.4 L911.1,542.0 L918.3,518.7 L929.0,498.1 L945.1,476.7 L959.4,459.7 L964.8,453.4 L973.8,457.0 L986.3,460.6 L998.8,458.8 L1009.5,453.4 L1018.5,446.3 L1028.3,445.4 L1041.7,448.1 L1057.8,448.9 L1075.7,445.4 L1087.4,440.0 L1086.6,440.9 L1101.5,430.6 L1113.3,415.7 L1112.5,412.1 L1125.0,391.5 L1134.0,371.8 L1142.9,354.8 L1151.9,344.1 L1159.0,333.3 L1162.6,325.8 L1167.1,324.8 L1175.1,326.2 L1187.7,325.8 L1198.4,322.6 L1209.1,318.1 L1221.6,309.2 L1232.4,298.5 L1243.1,289.5 L1251.2,283.3 L1257.4,280.6Z" fill="#fff" stroke="#a9a9a9" stroke-width="1.3" stroke-linejoin="round"/>
<path d="M1172.0,890.0 L1177.8,885.1 L1187.6,877.3 L1193.4,871.5 L1202.2,867.6 L1212.0,864.6 L1220.7,862.7 L1225.6,860.2 L1233.4,863.7 L1230.4,862.8 L1236.9,867.6 L1245.0,874.1 L1251.5,880.7 L1255.6,883.6 L1251.5,887.2 L1249.1,892.0 L1247.5,898.5 L1245.0,902.6 L1245.9,908.3 L1251.5,906.7 L1256.4,902.6 L1261.3,905.0 L1262.9,909.9 L1268.6,911.5 L1271.1,905.0 L1274.3,896.9 L1277.6,888.8 L1275.9,880.7 L1272.7,872.5 L1269.4,864.4 L1268.6,860.3 L1273.5,862.0 L1277.6,867.6 L1280.8,875.0 L1285.7,883.9 L1290.6,892.0 L1292.2,896.1 L1286.5,899.3 L1284.1,906.7 L1287.3,913.2 L1293.8,919.7 L1299.5,926.2 L1302.0,937.6 L1303.6,953.8 L1304.4,966.8 L1305.2,973.3 L1303.6,983.1 L1301.1,992.8 L1299.5,1001.0 L1296.3,1009.1 L1290.6,1012.4 L1284.1,1014.8 L1277.6,1017.2 L1272.7,1022.1 L1258.0,1018.9 L1241.8,1016.4 L1233.7,1012.4 L1227.2,1007.5 L1219.0,1001.0 L1212.5,996.9 L1206.0,996.1 L1197.1,997.7 L1192.2,1003.4 L1195.4,1009.1 L1202.6,1004.2 L1192.8,1007.5 L1196.1,1002.6 L1205.9,996.1 L1202.6,991.2 L1196.1,979.8 L1191.2,981.5 L1181.5,979.8 L1178.2,975.0 L1175.8,978.2 L1170.1,970.1 L1163.6,953.8 L1161.1,944.1 L1159.5,937.6 L1153.8,933.5 L1145.7,931.1 L1144.1,924.6 L1145.7,918.0 L1153.8,909.9 L1157.1,901.8 L1152.2,895.3 L1153.8,888.8 L1163.6,890.4 L1168.5,888.8Z" fill="#fff" stroke="#a9a9a9" stroke-width="1.3" stroke-linejoin="round"/>
<path d="M1375.5,765.5 L1391.6,764.7 L1405.9,765.5 L1418.4,762.9 L1427.3,765.5 L1436.3,762.9 L1445.2,760.2 L1448.8,765.5 L1445.2,774.5 L1443.4,785.2 L1438.1,796.0 L1427.3,803.1 L1425.5,812.1 L1434.5,810.3 L1441.6,805.8 L1445.2,813.8 L1450.6,822.8 L1445.2,824.6 L1432.7,826.4 L1434.5,831.7 L1448.8,830.8 L1454.2,835.3 L1458.6,831.7 L1459.5,821.0 L1461.3,806.7 L1468.5,799.5 L1473.8,796.0 L1475.6,788.8 L1472.1,778.1 L1463.1,774.5 L1456.0,760.2 L1461.3,754.8 L1468.5,749.4 L1481.0,740.5 L1491.7,731.6 L1502.5,720.8 L1513.2,715.5 L1523.9,712.8 L1534.7,717.2 L1549.0,721.7 L1566.9,719.0 L1570.4,735.1 L1566.9,749.4 L1565.1,763.8 L1566.9,778.1 L1570.4,792.4 L1572.2,806.7 L1575.8,821.0 L1581.2,831.7 L1588.3,842.5 L1590.1,853.2 L1584.8,858.6 L1577.6,860.4 L1570.4,865.7 L1552.6,865.7 L1534.7,862.1 L1531.1,865.7 L1523.9,872.9 L1527.5,860.0 L1520.4,872.5 L1517.7,888.6 L1521.3,902.9 L1527.5,910.1 L1540.0,913.7 L1552.6,919.0 L1558.8,928.0 L1558.8,938.7 L1556.1,945.9 L1543.6,949.4 L1531.1,951.2 L1522.1,956.6 L1511.4,963.8 L1506.0,970.9 L1506.0,985.2 L1518.6,987.0 L1516.8,992.4 L1507.8,992.4 L1509.6,997.7 L1513.2,1006.7 L1518.6,1015.6 L1516.8,1019.2 L1507.8,1024.6 L1497.1,1029.9 L1484.6,1028.2 L1477.4,1022.8 L1470.3,1015.6 L1464.9,1008.5 L1457.7,1003.1 L1454.2,997.7 L1463.1,992.4 L1468.5,987.0 L1456.0,983.4 L1445.2,976.3 L1436.3,974.5 L1427.3,972.7 L1413.0,969.1 L1402.3,967.3 L1391.6,969.1 L1380.8,970.9 L1373.7,965.5 L1371.9,953.0 L1366.5,942.3 L1365.6,922.6 L1363.8,906.5 L1361.1,890.4 L1357.6,870.7 L1355.8,860.0 L1351.0,858.8 L1347.1,854.9 L1343.2,851.0 L1330.1,848.6 L1322.3,847.8 L1320.3,845.1 L1323.6,844.3 L1330.1,845.5 L1336.7,846.4 L1344.5,843.1 L1343.2,839.2 L1336.7,836.0 L1332.7,832.7 L1328.8,830.1 L1322.3,830.1 L1315.8,828.8 L1310.5,825.5 L1317.1,823.6 L1323.6,823.6 L1330.1,824.9 L1336.7,827.2 L1344.5,824.9 L1351.0,821.6 L1355.6,822.2 L1360.2,824.9 L1365.4,823.6 L1369.3,826.8 L1374.5,823.6 L1377.1,820.9 L1381.0,820.3 L1387.6,818.3 L1388.9,810.5 L1387.6,802.7 L1385.0,797.4 L1388.9,798.7 L1394.1,796.1 L1400.0,794.2 L1407.7,788.8 L1409.4,776.3 L1405.9,767.3 L1391.6,767.3 L1375.5,767.3Z" fill="#fff" stroke="#a9a9a9" stroke-width="1.3" stroke-linejoin="round"/>
<path d="M1339.2,1053.4 L1342.7,1047.2 L1353.4,1040.9 L1365.9,1037.4 L1378.3,1037.4 L1385.5,1041.8 L1392.6,1048.1 L1397.0,1053.4 L1405.0,1060.5 L1409.5,1061.4 L1411.3,1067.7 L1417.5,1069.4 L1424.6,1070.3 L1426.4,1065.9 L1431.7,1063.2 L1437.1,1062.3 L1438.0,1055.2 L1436.2,1049.8 L1442.4,1052.5 L1449.5,1057.0 L1452.8,1059.6 L1455.2,1064.4 L1460.6,1071.6 L1465.9,1078.7 L1470.4,1085.8 L1473.0,1092.9 L1472.3,1097.0 L1465.6,1097.6 L1467.3,1103.3 L1471.8,1105.9 L1471.8,1110.4 L1467.3,1117.5 L1453.1,1116.6 L1442.4,1114.8 L1431.7,1116.6 L1424.6,1118.4 L1422.8,1122.0 L1415.7,1122.8 L1411.3,1130.0 L1405.0,1125.5 L1397.0,1121.1 L1389.0,1116.6 L1385.5,1110.4 L1376.6,1105.0 L1365.9,1100.6 L1353.4,1096.1 L1339.2,1090.8 L1332.9,1081.9 L1337.4,1081.0 L1344.5,1081.0 L1349.8,1076.6 L1353.4,1071.2 L1348.1,1067.7 L1342.7,1060.5Z" fill="#fff" stroke="#a9a9a9" stroke-width="1.3" stroke-linejoin="round"/>
<path d="M1447.8,1040.1 L1452.2,1033.8 L1460.2,1032.9 L1464.7,1031.2 L1470.9,1035.6 L1476.3,1042.7 L1481.6,1043.6 L1482.5,1038.3 L1488.7,1038.3 L1490.5,1045.4 L1497.6,1049.0 L1510.1,1050.7 L1513.6,1057.0 L1519.9,1064.1 L1515.4,1073.0 L1508.3,1080.1 L1501.2,1090.8 L1494.1,1101.5 L1490.5,1113.9 L1491.4,1128.2 L1493.2,1140.6 L1485.2,1137.1 L1481.6,1126.4 L1476.3,1116.6 L1477.1,1106.8 L1480.7,1097.9 L1476.3,1097.0 L1476.3,1092.6 L1473.6,1085.5 L1469.1,1078.3 L1463.8,1071.2 L1458.4,1064.1 L1454.9,1058.8 L1454.0,1049.8 L1453.1,1041.8Z" fill="#fff" stroke="#a9a9a9" stroke-width="1.3" stroke-linejoin="round"/>
<path d="M1511.9,1033.8 L1513.6,1028.5 L1522.5,1028.5 L1536.8,1023.1 L1535.0,1019.6 L1535.9,1010.7 L1531.4,1007.1 L1533.2,1004.5 L1538.6,1009.8 L1549.2,1011.6 L1565.3,1011.6 L1574.2,1016.0 L1578.6,1024.9 L1576.8,1032.0 L1567.0,1031.2 L1552.8,1028.5 L1543.9,1032.0 L1535.0,1040.9 L1526.1,1051.6 L1516.3,1052.5 L1511.0,1044.5 L1515.4,1037.4Z" fill="#fff" stroke="#a9a9a9" stroke-width="1.3" stroke-linejoin="round"/>
<g clip-path="url(#landclip)">
<path d="M1541.3,748.8 L1547.8,747.2 L1557.6,753.7 L1560.8,768.3 L1565.7,778.0 L1570.6,791.1 L1573.8,804.1 L1577.1,820.3 L1583.6,838.2 L1588.5,846.3 L1588.5,854.5 L1580.3,861.0 L1570.6,862.6 L1551.1,851.2 L1538.0,856.1 L1525.0,869.1 L1516.9,878.9 L1508.8,862.6 L1513.7,846.3 L1525.0,841.5 L1533.2,833.3 L1531.5,820.3 L1525.0,813.8 L1531.5,804.1 L1534.8,791.1 L1544.6,784.6 L1552.7,774.8 L1551.1,761.8Z" fill="#eff0f3" stroke="none" stroke-width="1.1" stroke-linejoin="round"/>
<ellipse cx="1168.6" cy="362.6" rx="5.9" ry="6.8" fill="#ebecf0"/>
<ellipse cx="1165.4" cy="328.0" rx="2.9" ry="3.3" fill="#ebecf0"/>
<ellipse cx="1246.7" cy="365.0" rx="4.9" ry="7.8" fill="#ebecf0"/>
<ellipse cx="1245.5" cy="395.1" rx="3.9" ry="5.5" fill="#ebecf0"/>
<ellipse cx="1163.3" cy="412.5" rx="4.6" ry="4.2" fill="#ebecf0"/>
<ellipse cx="1163.7" cy="478.0" rx="12.2" ry="9.8" fill="#ebecf0"/>
<ellipse cx="1132.8" cy="443.9" rx="2.6" ry="2.9" fill="#ebecf0"/>
<ellipse cx="1161.3" cy="467.8" rx="6.5" ry="3.6" fill="#ebecf0"/>
<ellipse cx="1119.0" cy="492.7" rx="2.3" ry="2.6" fill="#ebecf0"/>
<ellipse cx="1148.3" cy="495.9" rx="3.6" ry="4.1" fill="#ebecf0"/>
<ellipse cx="1148.1" cy="495.0" rx="3.3" ry="3.6" fill="#ebecf0"/>
<ellipse cx="1119.7" cy="492.5" rx="2.3" ry="2.6" fill="#ebecf0"/>
<ellipse cx="1147.3" cy="517.7" rx="3.3" ry="3.6" fill="#ebecf0"/>
<ellipse cx="1099.3" cy="540.8" rx="3.3" ry="3.3" fill="#ebecf0"/>
<ellipse cx="1142.4" cy="585.2" rx="4.6" ry="4.9" fill="#ebecf0"/>
<ellipse cx="1083.9" cy="638.0" rx="8.9" ry="7.3" fill="#ebecf0"/>
<ellipse cx="1179.8" cy="634.0" rx="11.4" ry="7.3" fill="#ebecf0"/>
<ellipse cx="1123.7" cy="655.9" rx="4.1" ry="3.3" fill="#ebecf0"/>
<ellipse cx="978.1" cy="499.0" rx="6.2" ry="2.6" fill="#ebecf0"/>
<ellipse cx="1002.5" cy="543.7" rx="2.6" ry="4.9" fill="#ebecf0"/>
<ellipse cx="1027.7" cy="605.5" rx="3.6" ry="8.9" fill="#ebecf0"/>
<ellipse cx="961.1" cy="627.2" rx="4.6" ry="2.9" fill="#ebecf0"/>
<ellipse cx="919.6" cy="608.8" rx="4.1" ry="2.6" fill="#ebecf0"/>
<ellipse cx="965.1" cy="657.1" rx="6.5" ry="4.1" fill="#ebecf0"/>
<ellipse cx="968.4" cy="659.5" rx="8.9" ry="5.7" fill="#ebecf0"/>
<ellipse cx="1021.2" cy="722.1" rx="13.8" ry="6.2" fill="#ebecf0"/>
<ellipse cx="1047.2" cy="722.9" rx="5.2" ry="4.6" fill="#ebecf0"/>
<ellipse cx="911.5" cy="734.8" rx="3.9" ry="3.9" fill="#ebecf0"/>
<ellipse cx="947.2" cy="773.0" rx="3.9" ry="3.9" fill="#ebecf0"/>
<ellipse cx="1043.2" cy="774.6" rx="4.6" ry="3.6" fill="#ebecf0"/>
<ellipse cx="1013.1" cy="825.0" rx="6.2" ry="3.3" fill="#ebecf0"/>
<ellipse cx="1042.4" cy="834.3" rx="4.6" ry="3.9" fill="#ebecf0"/>
<ellipse cx="1107.5" cy="709.1" rx="9.8" ry="4.9" fill="#ebecf0"/>
<ellipse cx="1196.1" cy="721.3" rx="10.6" ry="13.8" fill="#ebecf0"/>
<ellipse cx="1153.8" cy="795.3" rx="6.2" ry="4.2" fill="#ebecf0"/>
<ellipse cx="1168.5" cy="745.7" rx="6.8" ry="4.2" fill="#ebecf0"/>
<ellipse cx="1128.6" cy="816.4" rx="2.6" ry="7.3" fill="#ebecf0"/>
<ellipse cx="1139.2" cy="734.3" rx="2.9" ry="2.3" fill="#ebecf0"/>
<ellipse cx="1046.5" cy="722.9" rx="3.6" ry="4.6" fill="#ebecf0"/>
<ellipse cx="1153.8" cy="688.8" rx="2.6" ry="4.2" fill="#ebecf0"/>
<ellipse cx="1183.1" cy="669.3" rx="3.6" ry="2.9" fill="#ebecf0"/>
<ellipse cx="1122.9" cy="657.1" rx="3.3" ry="3.6" fill="#ebecf0"/>
<ellipse cx="944.0" cy="862.0" rx="3.9" ry="4.6" fill="#ebecf0"/>
<ellipse cx="936.7" cy="896.1" rx="11.4" ry="8.9" fill="#ebecf0"/>
<ellipse cx="975.7" cy="903.4" rx="4.6" ry="2.6" fill="#ebecf0"/>
<ellipse cx="989.5" cy="938.4" rx="2.6" ry="4.9" fill="#ebecf0"/>
<ellipse cx="1044.0" cy="902.6" rx="4.6" ry="4.6" fill="#ebecf0"/>
<ellipse cx="1066.7" cy="964.4" rx="3.6" ry="2.9" fill="#ebecf0"/>
<ellipse cx="1095.3" cy="896.1" rx="6.8" ry="6.2" fill="#ebecf0"/>
<ellipse cx="1098.5" cy="962.8" rx="5.2" ry="3.3" fill="#ebecf0"/>
<ellipse cx="1068.5" cy="963.6" rx="4.6" ry="2.6" fill="#ebecf0"/>
<ellipse cx="1043.3" cy="901.8" rx="3.6" ry="3.9" fill="#ebecf0"/>
<ellipse cx="1137.6" cy="875.0" rx="4.2" ry="4.6" fill="#ebecf0"/>
<ellipse cx="1108.3" cy="844.9" rx="4.6" ry="4.6" fill="#ebecf0"/>
<ellipse cx="1081.3" cy="1015.0" rx="8.1" ry="4.6" fill="#ebecf0"/>
<ellipse cx="1001.6" cy="1046.7" rx="3.6" ry="3.9" fill="#ebecf0"/>
<ellipse cx="1233.7" cy="919.7" rx="15.4" ry="12.2" fill="#ebecf0"/>
<ellipse cx="1252.4" cy="963.6" rx="3.3" ry="3.6" fill="#ebecf0"/>
<ellipse cx="1274.3" cy="1009.9" rx="5.9" ry="5.9" fill="#ebecf0"/>
<ellipse cx="1238.5" cy="888.8" rx="2.1" ry="3.3" fill="#ebecf0"/>
<ellipse cx="1439.5" cy="832.0" rx="7.8" ry="3.6" fill="#ebecf0"/>
<ellipse cx="1497.2" cy="847.2" rx="6.8" ry="5.2" fill="#ebecf0"/>
<ellipse cx="1458.2" cy="758.9" rx="2.3" ry="2.3" fill="#ebecf0"/>
<ellipse cx="1509.4" cy="743.1" rx="3.9" ry="2.3" fill="#ebecf0"/>
<ellipse cx="1526.7" cy="765.0" rx="8.1" ry="5.7" fill="#ebecf0"/>
<ellipse cx="1508.8" cy="743.1" rx="4.6" ry="2.9" fill="#ebecf0"/>
<ellipse cx="1499.0" cy="846.3" rx="6.5" ry="5.7" fill="#ebecf0"/>
<ellipse cx="1481.1" cy="753.7" rx="2.9" ry="4.9" fill="#ebecf0"/>
<ellipse cx="1536.4" cy="786.2" rx="6.5" ry="4.9" fill="#ebecf0"/>
<ellipse cx="1388.3" cy="915.0" rx="6.8" ry="5.2" fill="#ebecf0"/>
<ellipse cx="1417.6" cy="902.0" rx="2.9" ry="5.2" fill="#ebecf0"/>
<ellipse cx="1455.8" cy="901.1" rx="4.6" ry="6.2" fill="#ebecf0"/>
<ellipse cx="1453.3" cy="958.0" rx="5.2" ry="7.8" fill="#ebecf0"/>
<ellipse cx="1379.3" cy="955.6" rx="3.9" ry="2.3" fill="#ebecf0"/>
<ellipse cx="1481.0" cy="932.8" rx="3.9" ry="3.3" fill="#ebecf0"/>
<ellipse cx="1476.1" cy="1017.4" rx="3.6" ry="6.2" fill="#ebecf0"/>
<ellipse cx="1359.0" cy="1071.1" rx="4.6" ry="3.3" fill="#ebecf0"/>
<ellipse cx="1512.7" cy="899.5" rx="2.6" ry="10.6" fill="#ebecf0"/>
<ellipse cx="1481.1" cy="932.8" rx="3.6" ry="2.9" fill="#ebecf0"/>
<ellipse cx="1359.6" cy="1071.2" rx="4.6" ry="3.6" fill="#ebecf0"/>
<ellipse cx="1418.4" cy="1085.1" rx="4.3" ry="2.5" fill="#ebecf0"/>
<ellipse cx="1475.4" cy="1082.8" rx="2.8" ry="5.7" fill="#ebecf0"/>
<ellipse cx="1308.7" cy="643.2" rx="5.4" ry="5.4" fill="#ebecf0"/>
<ellipse cx="1279.2" cy="703.1" rx="2.5" ry="3.9" fill="#ebecf0"/>
<ellipse cx="1182.6" cy="669.1" rx="3.2" ry="2.5" fill="#ebecf0"/>
<ellipse cx="1222.0" cy="672.7" rx="2.1" ry="2.5" fill="#ebecf0"/>
<ellipse cx="1154.0" cy="688.8" rx="2.5" ry="4.3" fill="#ebecf0"/>
<path d="M1209.3,319.2 L1219.0,320.8 L1215.0,335.8 L1223.1,347.2 L1229.6,355.3 L1223.9,356.9 L1222.3,362.6 L1216.6,364.2 L1214.1,369.9 L1218.2,373.2 L1219.0,379.7 L1228.0,379.7 L1219.8,382.9 L1215.0,381.3 L1205.2,382.1 L1203.6,387.8 L1198.7,388.6 L1198.4,394.3" fill="none" stroke="#a3a3a3" stroke-width="1.45" stroke-linejoin="round"/>
<path d="M1198.4,394.3 L1200.3,400.8 L1202.8,405.7 L1202.8,418.7 L1211.7,415.4 L1218.2,411.4 L1225.5,413.0 L1227.2,418.7 L1232.8,426.0 L1233.7,436.6 L1235.8,439.0" fill="none" stroke="#a3a3a3" stroke-width="1.45" stroke-linejoin="round"/>
<path d="M1198.4,394.3 L1193.8,397.6 L1179.2,398.4 L1175.9,400.8 L1166.2,395.9 L1162.1,397.6 L1156.4,395.9 L1151.5,393.5 L1145.9,394.3 L1145.0,400.8 L1139.3,402.4 L1138.5,410.6 L1132.8,421.1 L1146.7,426.8 L1159.7,425.2 L1162.1,428.5 L1169.4,433.3 L1175.9,435.0 L1182.4,443.9 L1187.3,446.3 L1195.4,453.7 L1205.2,456.1 L1216.6,456.9 L1220.7,460.2 L1221.5,466.7 L1225.5,461.8 L1228.8,461.5" fill="none" stroke="#a3a3a3" stroke-width="1.45" stroke-linejoin="round"/>
<path d="M1125.5,391.1 L1132.0,395.9 L1136.9,401.6 L1139.3,404.1" fill="none" stroke="#a3a3a3" stroke-width="1.45" stroke-linejoin="round"/>
<path d="M1146.7,426.8 L1152.4,433.3 L1154.8,438.2 L1159.7,442.3 L1158.0,447.2 L1148.3,448.8 L1141.8,452.8 L1134.5,452.0 L1136.1,456.1 L1144.2,460.2" fill="none" stroke="#a3a3a3" stroke-width="1.45" stroke-linejoin="round"/>
<path d="M1082.3,485.2 L1083.1,494.1 L1087.2,502.3 L1088.8,508.8 L1098.5,507.2 L1101.0,512.0 L1100.2,517.7 L1106.7,518.5 L1111.5,516.1 L1118.0,524.2 L1121.3,525.9 L1116.4,529.9 L1114.8,539.7 L1110.7,542.1 L1105.9,551.1 L1101.8,556.7 L1109.9,560.8 L1112.4,566.5 L1116.4,568.9 L1117.2,573.8 L1109.9,573.8 L1103.4,578.7 L1102.6,582.0 L1108.3,583.6 L1109.1,586.8 L1121.3,588.5 L1124.6,590.1 L1123.7,593.3 L1119.7,595.0 L1119.7,600.7 L1126.2,598.2 L1131.1,599.8 L1135.9,607.2 L1140.8,608.0" fill="none" stroke="#a3a3a3" stroke-width="1.45" stroke-linejoin="round"/>
<path d="M1111.5,516.1 L1109.9,512.8 L1116.4,508.8 L1129.4,505.5 L1129.4,497.4 L1133.5,495.0 L1139.2,499.0 L1144.1,498.2 L1147.3,501.5 L1148.1,508.8 L1152.2,513.7 L1155.4,517.7 L1165.2,512.8 L1173.3,513.7 L1179.8,511.2 L1181.5,516.1 L1187.2,521.8 L1192.8,520.2 L1201.0,521.0 L1204.2,531.5 L1207.5,539.7 L1202.6,541.3 L1196.1,544.6 L1189.6,548.6 L1183.1,552.7 L1179.8,548.6 L1179.8,542.9 L1170.1,542.9 L1162.0,539.7 L1153.8,541.3 L1142.4,537.2 L1140.0,541.3 L1140.8,546.2 L1139.2,550.2 L1144.1,555.1 L1143.3,559.2 L1135.9,560.0 L1131.1,570.6 L1129.4,581.1 L1124.6,581.1 L1117.2,573.8" fill="none" stroke="#a3a3a3" stroke-width="1.45" stroke-linejoin="round"/>
<path d="M1140.8,608.0 L1147.3,608.8 L1153.8,604.7 L1165.2,599.8 L1168.5,596.6 L1181.5,591.7 L1191.2,585.2 L1194.5,578.7 L1201.0,573.8 L1204.2,572.2" fill="none" stroke="#a3a3a3" stroke-width="1.45" stroke-linejoin="round"/>
<path d="M1140.8,608.0 L1142.4,614.5 L1141.6,637.2 L1137.6,638.9 L1136.7,647.0 L1134.3,648.6 L1132.7,660.0" fill="none" stroke="#a3a3a3" stroke-width="1.45" stroke-linejoin="round"/>
<path d="M1141.6,637.2 L1150.6,637.2 L1150.6,643.7 L1144.1,645.4 L1144.1,650.2 L1153.8,653.5 L1163.6,652.7 L1170.1,655.1 L1178.2,653.5 L1186.3,655.1 L1196.1,653.5 L1202.6,650.2 L1209.1,648.6 L1215.6,650.2 L1217.2,647.0 L1220.5,642.9 L1214.8,640.5 L1215.6,629.9 L1202.6,629.9" fill="none" stroke="#a3a3a3" stroke-width="1.45" stroke-linejoin="round"/>
<path d="M1103.4,578.7 L1095.3,574.6 L1092.0,585.2 L1087.2,585.2 L1081.5,581.1 L1072.5,577.9" fill="none" stroke="#a3a3a3" stroke-width="1.45" stroke-linejoin="round"/>
<path d="M1032.6,460.0 L1033.4,468.1 L1035.9,473.0 L1037.5,477.9" fill="none" stroke="#a3a3a3" stroke-width="1.45" stroke-linejoin="round"/>
<path d="M946.4,612.0 L947.2,622.6 L945.6,630.7 L941.5,634.8 L940.7,640.5 L934.2,642.1 L932.6,647.0 L938.3,651.1 L941.5,648.6 L949.7,643.7 L957.8,644.6 L962.7,647.0 L969.2,645.4 L974.1,648.6 L977.3,638.9 L980.6,629.1" fill="none" stroke="#a3a3a3" stroke-width="1.45" stroke-linejoin="round"/>
<path d="M987.1,608.0 L995.2,605.5 L1000.1,609.6 L1002.5,616.1 L1004.1,624.2 L1016.3,625.0 L1020.4,625.9 L1022.0,635.6 L1023.7,645.4 L1020.4,648.6" fill="none" stroke="#a3a3a3" stroke-width="1.45" stroke-linejoin="round"/>
<path d="M1020.4,625.9 L1021.2,617.7 L1031.0,615.3 L1040.7,616.9 L1048.9,616.1 L1057.0,610.4 L1060.2,604.7 L1062.7,599.8" fill="none" stroke="#a3a3a3" stroke-width="1.45" stroke-linejoin="round"/>
<path d="M892.0,688.0 L901.7,689.6 L909.8,696.1 L918.8,696.1 L926.9,692.0 L931.8,690.4 L939.1,692.8" fill="none" stroke="#a3a3a3" stroke-width="1.45" stroke-linejoin="round"/>
<path d="M939.1,692.8 L944.8,688.0 L942.4,683.9 L949.7,678.2 L957.8,679.0 L965.9,680.7 L970.8,679.0 L976.5,683.9 L983.8,683.1 L990.3,676.6 L996.0,672.5 L990.3,668.5 L990.3,661.1 L996.8,665.2 L1005.0,666.0 L1010.7,656.3 L1017.2,655.4 L1018.8,648.9 L1023.7,648.1 L1023.7,640.0" fill="none" stroke="#a3a3a3" stroke-width="1.45" stroke-linejoin="round"/>
<path d="M939.1,692.8 L943.2,697.7 L945.6,705.0 L952.9,706.7 L960.2,710.7 L958.6,716.4 L965.9,719.7 L969.2,724.6 L974.1,719.7 L983.8,719.7 L987.9,723.7 L988.7,730.2 L996.8,732.7 L998.5,740.0 L1003.3,743.3 L996.8,745.7 L989.5,746.5 L993.6,752.2 L985.4,758.7 L987.9,761.1 L982.2,772.5 L984.6,781.5 L990.3,787.2 L1000.1,790.4" fill="none" stroke="#a3a3a3" stroke-width="1.45" stroke-linejoin="round"/>
<path d="M1000.1,790.4 L996.8,801.0 L992.0,804.2 L996.0,808.3 L986.3,811.5 L978.9,807.5 L977.3,802.6 L970.8,801.0 L962.7,802.6 L957.8,800.2 L952.9,803.4 L952.1,811.5 L948.9,812.4 L948.0,819.7 L941.5,820.5 L936.7,814.8 L928.5,812.4 L924.5,807.5 L921.2,812.4 L909.8,813.2 L904.1,809.1 L897.6,805.0" fill="none" stroke="#a3a3a3" stroke-width="1.45" stroke-linejoin="round"/>
<path d="M986.3,811.5 L986.3,818.9 L984.6,823.7 L993.6,829.4 L998.5,835.1 L996.8,840.0" fill="none" stroke="#a3a3a3" stroke-width="1.45" stroke-linejoin="round"/>
<path d="M1000.1,790.4 L1002.5,788.0 L1018.0,789.6" fill="none" stroke="#a3a3a3" stroke-width="1.45" stroke-linejoin="round"/>
<path d="M1023.7,648.1 L1031.0,653.8 L1035.9,659.5 L1039.9,666.8 L1031.0,669.3 L1030.2,674.1 L1034.2,680.7 L1041.5,686.3 L1046.4,693.7 L1044.8,701.8 L1039.1,702.6 L1034.2,711.5 L1040.7,715.6 L1039.9,723.7 L1039.1,732.7 L1044.8,740.0 L1050.5,742.4 L1046.4,746.5 L1051.3,746.5 L1047.2,753.0 L1042.4,754.6 L1043.2,758.7 L1031.0,763.6 L1021.2,763.6 L1025.3,767.6 L1023.7,775.8 L1022.8,783.1 L1018.0,789.6 L1018.0,801.8 L1025.3,805.0 L1034.2,798.5 L1038.3,792.0 L1047.2,784.7 L1052.1,781.5 L1054.6,775.8 L1057.8,771.7 L1065.9,774.1 L1070.0,776.6" fill="none" stroke="#a3a3a3" stroke-width="1.45" stroke-linejoin="round"/>
<path d="M1034.2,798.5 L1032.6,808.3 L1033.4,817.2 L1031.8,820.5 L1039.9,826.2 L1054.6,829.4 L1047.2,831.9 L1046.4,840.0" fill="none" stroke="#a3a3a3" stroke-width="1.45" stroke-linejoin="round"/>
<path d="M910.7,666.0 L913.9,664.4 L918.0,657.9 L922.0,661.1 L930.2,655.4 L938.3,653.0 L936.7,649.8 L931.8,646.5" fill="none" stroke="#a3a3a3" stroke-width="1.45" stroke-linejoin="round"/>
<path d="M1040.0,687.2 L1053.8,686.3 L1053.0,692.0 L1057.9,697.7 L1064.4,702.6 L1072.5,705.9 L1079.8,712.4 L1083.9,720.5 L1088.0,722.1 L1083.9,728.6 L1085.5,734.3 L1070.9,732.7 L1071.7,739.2 L1076.6,744.1 L1077.4,751.4 L1088.0,753.8 L1090.4,758.7 L1097.7,761.1" fill="none" stroke="#a3a3a3" stroke-width="1.45" stroke-linejoin="round"/>
<path d="M1057.9,697.7 L1057.1,688.8 L1062.0,682.3 L1068.5,670.9 L1079.0,664.4 L1081.5,661.1 L1090.4,659.5 L1096.1,664.4 L1093.7,668.5 L1100.2,675.0 L1111.5,673.3 L1123.7,671.7 L1125.4,675.0 L1131.1,676.6 L1137.6,679.0 L1141.6,687.2 L1140.8,693.7 L1142.4,700.2 L1140.0,705.0 L1144.1,707.5 L1153.8,706.7 L1160.3,701.8 L1171.7,700.2 L1174.1,696.9 L1183.1,697.7 L1193.7,695.3 L1194.5,675.0 L1201.8,672.5 L1199.3,665.2 L1202.6,661.1 L1208.3,657.9" fill="none" stroke="#a3a3a3" stroke-width="1.45" stroke-linejoin="round"/>
<path d="M1123.7,671.7 L1128.6,666.0 L1129.4,657.1 L1133.5,652.2 L1135.9,644.9 L1139.2,640.0" fill="none" stroke="#a3a3a3" stroke-width="1.45" stroke-linejoin="round"/>
<path d="M1174.1,696.9 L1172.5,705.0 L1169.3,711.5 L1171.7,717.2 L1169.3,722.9 L1175.0,728.6 L1183.1,731.1 L1188.8,739.2 L1185.5,745.7 L1183.1,753.8 L1180.7,757.9 L1196.1,755.4 L1204.2,753.8 L1216.4,751.4" fill="none" stroke="#a3a3a3" stroke-width="1.45" stroke-linejoin="round"/>
<path d="M1153.8,706.7 L1153.0,711.5 L1137.6,715.6 L1134.3,721.3 L1121.3,727.8 L1121.3,740.8 L1130.2,742.4 L1131.9,753.8 L1145.7,755.4 L1147.3,763.6 L1153.8,770.1 L1157.1,768.5" fill="none" stroke="#a3a3a3" stroke-width="1.45" stroke-linejoin="round"/>
<path d="M1121.3,740.8 L1112.4,742.4 L1116.4,748.9 L1115.6,753.8 L1105.9,757.1 L1097.7,761.1 L1101.0,768.5 L1102.6,778.2 L1109.9,782.3 L1118.9,780.7 L1122.9,783.1 L1129.4,784.7 L1129.4,794.5 L1137.6,797.7" fill="none" stroke="#a3a3a3" stroke-width="1.45" stroke-linejoin="round"/>
<path d="M1064.4,774.1 L1076.6,775.8 L1082.3,781.5 L1088.8,791.2 L1093.7,796.9 L1092.0,803.4 L1100.2,805.9 L1101.8,814.0 L1109.9,818.9 L1113.2,825.4 L1121.3,824.6 L1127.8,827.0" fill="none" stroke="#a3a3a3" stroke-width="1.45" stroke-linejoin="round"/>
<path d="M1180.7,757.9 L1179.8,768.5 L1178.2,779.8 L1181.5,789.6 L1186.3,792.8" fill="none" stroke="#a3a3a3" stroke-width="1.45" stroke-linejoin="round"/>
<path d="M917.2,870.9 L922.0,868.9 L925.3,868.9 L931.8,875.0 L933.4,879.8 L937.5,880.7 L938.3,876.6 L941.5,872.5 L952.9,871.7 L957.8,878.2 L962.7,883.9 L962.7,887.2 L974.1,882.3 L978.1,883.1 L982.2,886.3 L987.1,881.5" fill="none" stroke="#a3a3a3" stroke-width="1.45" stroke-linejoin="round"/>
<path d="M987.1,881.5 L988.7,874.1 L998.5,870.1 L1007.4,866.0 L1009.8,862.8 L1006.6,856.3 L1005.8,850.6 L1000.1,848.1 L993.6,845.7 L992.8,840.0" fill="none" stroke="#a3a3a3" stroke-width="1.45" stroke-linejoin="round"/>
<path d="M1009.8,862.8 L1022.8,862.0 L1023.7,866.0 L1031.0,867.6 L1037.5,870.1 L1042.4,866.0 L1052.1,864.4 L1057.0,864.4 L1059.4,869.3 L1066.7,871.7 L1070.0,872.5" fill="none" stroke="#a3a3a3" stroke-width="1.45" stroke-linejoin="round"/>
<path d="M1052.1,864.4 L1052.9,860.3 L1047.2,857.9 L1048.0,844.9 L1047.2,840.0" fill="none" stroke="#a3a3a3" stroke-width="1.45" stroke-linejoin="round"/>
<path d="M987.1,881.5 L995.2,888.8 L1001.7,892.0 L1004.1,899.3" fill="none" stroke="#a3a3a3" stroke-width="1.45" stroke-linejoin="round"/>
<path d="M1066.7,871.7 L1067.6,880.7" fill="none" stroke="#a3a3a3" stroke-width="1.45" stroke-linejoin="round"/>
<path d="M971.1,966.0 L983.8,964.9 L993.6,968.5 L1013.9,970.1 L1013.9,978.2 L1018.0,979.0 L1018.8,974.1 L1023.7,972.5 L1027.7,967.6 L1035.9,966.0 L1044.0,968.5 L1048.9,974.1 L1049.7,978.2 L1044.8,979.8 L1039.9,985.5 L1042.4,988.8 L1048.9,984.7 L1057.0,983.9 L1061.1,987.2 L1063.5,993.7 L1070.0,994.5" fill="none" stroke="#a3a3a3" stroke-width="1.45" stroke-linejoin="round"/>
<path d="M1063.5,993.7 L1052.1,1002.6 L1044.0,1005.9 L1042.4,1009.1 L1046.4,1011.5 L1044.8,1017.2 L1039.1,1020.5 L1035.0,1027.0 L1037.5,1035.1 L1032.6,1040.0" fill="none" stroke="#a3a3a3" stroke-width="1.45" stroke-linejoin="round"/>
<path d="M956.2,989.9 L967.6,991.9 L974.9,989.9" fill="none" stroke="#a3a3a3" stroke-width="1.45" stroke-linejoin="round"/>
<path d="M1055.4,864.4 L1057.9,869.3 L1066.8,873.3 L1073.3,872.5 L1080.7,875.0 L1087.2,873.3 L1100.2,872.5" fill="none" stroke="#a3a3a3" stroke-width="1.45" stroke-linejoin="round"/>
<path d="M1175.0,887.2 L1183.1,893.7 L1186.3,903.4 L1191.2,909.9 L1198.5,914.0 L1207.5,918.0 L1212.4,921.3" fill="none" stroke="#a3a3a3" stroke-width="1.45" stroke-linejoin="round"/>
<path d="M1191.2,909.9 L1181.5,913.2 L1176.6,915.6 L1171.7,926.2 L1163.6,935.9 L1160.3,939.2" fill="none" stroke="#a3a3a3" stroke-width="1.45" stroke-linejoin="round"/>
<path d="M1196.1,979.8 L1201.0,973.3 L1204.2,968.5" fill="none" stroke="#a3a3a3" stroke-width="1.45" stroke-linejoin="round"/>
<path d="M1122.0,1027.2 L1120.3,1032.0 L1115.4,1040.2 L1108.9,1045.0 L1105.7,1041.8 L1100.0,1041.0 L1096.7,1047.5 L1097.6,1052.4 L1104.1,1058.0 L1108.1,1059.7 L1106.5,1064.6" fill="none" stroke="#a3a3a3" stroke-width="1.45" stroke-linejoin="round"/>
<path d="M1037.4,1035.3 L1028.5,1041.0 L1024.4,1048.3 L1028.5,1063.7" fill="none" stroke="#a3a3a3" stroke-width="1.45" stroke-linejoin="round"/>
<path d="M1208.5,919.7 L1211.7,914.8 L1215.0,909.9 L1220.7,903.4 L1225.5,900.2 L1230.4,901.8 L1235.3,898.5 L1243.4,899.3 L1245.0,902.6" fill="none" stroke="#a3a3a3" stroke-width="1.45" stroke-linejoin="round"/>
<path d="M1208.5,919.7 L1206.8,928.6 L1215.8,932.7 L1219.0,939.2 L1223.1,944.1 L1222.3,950.6 L1230.4,944.1 L1237.7,940.8 L1241.8,937.6 L1244.2,944.1 L1251.5,941.6 L1264.6,937.6 L1271.9,935.9" fill="none" stroke="#a3a3a3" stroke-width="1.45" stroke-linejoin="round"/>
<path d="M1254.8,901.0 L1259.7,909.9 L1253.2,911.5 L1261.3,924.6 L1267.0,931.1 L1271.9,935.9" fill="none" stroke="#a3a3a3" stroke-width="1.45" stroke-linejoin="round"/>
<path d="M1271.9,935.9 L1273.5,944.1 L1270.2,947.3 L1268.6,953.8 L1261.3,959.5 L1268.6,962.8 L1279.2,965.2 L1281.6,970.1 L1280.0,975.0 L1274.3,978.2 L1273.5,983.1 L1264.6,985.5 L1253.2,984.7 L1248.3,991.2 L1243.4,996.1 L1240.2,1000.2 L1241.8,1005.9 L1239.3,1012.4 L1241.8,1016.4" fill="none" stroke="#a3a3a3" stroke-width="1.45" stroke-linejoin="round"/>
<path d="M1271.9,935.9 L1277.6,932.7 L1272.7,928.6 L1277.6,924.6 L1276.7,917.2 L1285.7,915.6 L1287.3,913.2" fill="none" stroke="#a3a3a3" stroke-width="1.45" stroke-linejoin="round"/>
<path d="M1280.0,975.0 L1293.8,978.2 L1297.1,973.3 L1300.3,967.6 L1304.4,968.5" fill="none" stroke="#a3a3a3" stroke-width="1.45" stroke-linejoin="round"/>
<path d="M1222.3,950.6 L1206.0,957.1 L1204.4,968.5 L1209.3,975.0 L1201.1,982.3 L1197.1,979.8 L1186.5,978.2 L1180.0,979.8" fill="none" stroke="#a3a3a3" stroke-width="1.45" stroke-linejoin="round"/>
<path d="M1391.5,822.0 L1394.0,825.2 L1392.4,831.7 L1389.1,839.8 L1389.9,846.3 L1385.0,851.2 L1388.3,856.1 L1392.4,862.6 L1398.0,869.1 L1399.7,874.8 L1391.5,875.6 L1385.0,877.2 L1382.6,880.5 L1389.9,883.7 L1396.4,888.6 L1393.2,895.1 L1389.9,900.0" fill="none" stroke="#a3a3a3" stroke-width="1.45" stroke-linejoin="round"/>
<path d="M1385.0,818.7 L1391.5,824.4 L1404.6,823.6 L1411.1,816.3 L1417.6,812.2 L1424.1,811.4" fill="none" stroke="#a3a3a3" stroke-width="1.45" stroke-linejoin="round"/>
<path d="M1398.0,869.1 L1407.8,865.9 L1414.3,863.4 L1420.8,867.5 L1430.6,869.1 L1437.1,870.7 L1436.3,878.9 L1432.2,885.4 L1430.6,891.9 L1433.8,900.0" fill="none" stroke="#a3a3a3" stroke-width="1.45" stroke-linejoin="round"/>
<path d="M1453.3,843.1 L1455.0,851.2 L1458.2,861.0 L1461.5,869.1 L1458.2,872.4 L1450.1,874.0 L1445.2,882.1 L1438.7,882.1 L1436.3,878.9" fill="none" stroke="#a3a3a3" stroke-width="1.45" stroke-linejoin="round"/>
<path d="M1461.5,869.1 L1471.2,872.4 L1476.1,877.2 L1481.0,876.4 L1482.6,864.2 L1490.7,861.0 L1495.6,857.7 L1492.4,852.8 L1483.4,852.8 L1484.2,846.3 L1487.5,841.5" fill="none" stroke="#a3a3a3" stroke-width="1.45" stroke-linejoin="round"/>
<path d="M1471.2,872.4 L1472.8,880.5 L1477.7,891.9 L1480.2,900.0" fill="none" stroke="#a3a3a3" stroke-width="1.45" stroke-linejoin="round"/>
<path d="M1541.3,720.3 L1539.7,742.3 L1537.2,753.7 L1535.6,761.8 L1539.7,768.3 L1541.3,773.2 L1543.7,778.0 L1551.1,774.8 L1555.9,771.5" fill="none" stroke="#a3a3a3" stroke-width="1.45" stroke-linejoin="round"/>
<path d="M1482.8,740.7 L1487.6,743.1 L1488.5,747.2 L1497.4,748.8 L1500.7,753.7 L1499.8,756.9 L1507.2,755.3 L1515.3,752.0 L1523.4,747.2 L1539.7,746.3" fill="none" stroke="#a3a3a3" stroke-width="1.45" stroke-linejoin="round"/>
<path d="M1500.7,753.7 L1494.1,763.4 L1495.8,769.9 L1492.5,774.8 L1499.0,779.7 L1512.0,782.9 L1513.7,791.1 L1516.1,794.3 L1524.2,791.1 L1525.0,779.7 L1531.5,777.2 L1543.7,778.0" fill="none" stroke="#a3a3a3" stroke-width="1.45" stroke-linejoin="round"/>
<path d="M1516.1,794.3 L1508.8,796.7 L1502.3,797.6 L1503.9,804.1 L1508.8,810.6 L1515.3,817.1 L1520.2,825.2 L1521.8,828.5 L1515.3,836.6 L1510.4,841.5 L1508.8,846.3" fill="none" stroke="#a3a3a3" stroke-width="1.45" stroke-linejoin="round"/>
<path d="M1516.1,794.3 L1525.0,797.6 L1532.4,797.6 L1531.5,802.4 L1528.3,804.1 L1529.9,812.2 L1523.4,815.4 L1533.2,817.1" fill="none" stroke="#a3a3a3" stroke-width="1.45" stroke-linejoin="round"/>
<path d="M1521.8,828.5 L1531.5,831.7 L1533.2,838.2 L1536.4,843.1 L1531.5,846.3 L1521.8,848.0 L1510.4,844.7" fill="none" stroke="#a3a3a3" stroke-width="1.45" stroke-linejoin="round"/>
<path d="M1508.8,846.3 L1508.8,856.1 L1510.4,862.6 L1503.9,864.2 L1500.7,875.6 L1489.3,878.9 L1481.1,875.6" fill="none" stroke="#a3a3a3" stroke-width="1.45" stroke-linejoin="round"/>
<path d="M1543.7,778.0 L1547.8,786.2 L1555.9,787.8 L1565.7,784.6" fill="none" stroke="#a3a3a3" stroke-width="1.45" stroke-linejoin="round"/>
<path d="M1546.2,795.9 L1560.8,799.2 L1572.2,797.6" fill="none" stroke="#a3a3a3" stroke-width="1.45" stroke-linejoin="round"/>
<path d="M1361.5,893.0 L1363.9,899.5 L1373.7,897.9 L1381.8,900.3 L1388.3,896.3 L1394.0,890.6 L1396.4,884.9 L1401.3,886.5 L1404.6,889.8" fill="none" stroke="#a3a3a3" stroke-width="1.45" stroke-linejoin="round"/>
<path d="M1404.6,889.8 L1409.4,899.5 L1411.1,907.6 L1407.8,915.0 L1413.5,923.9" fill="none" stroke="#a3a3a3" stroke-width="1.45" stroke-linejoin="round"/>
<path d="M1413.5,923.9 L1424.1,921.5 L1433.8,917.4 L1442.8,913.3" fill="none" stroke="#a3a3a3" stroke-width="1.45" stroke-linejoin="round"/>
<path d="M1442.8,913.3 L1440.3,904.4 L1437.1,899.5 L1431.4,892.2 L1432.2,884.9 L1437.1,880.0" fill="none" stroke="#a3a3a3" stroke-width="1.45" stroke-linejoin="round"/>
<path d="M1442.8,913.3 L1448.5,916.6 L1456.6,922.3 L1466.3,927.2 L1470.4,928.8" fill="none" stroke="#a3a3a3" stroke-width="1.45" stroke-linejoin="round"/>
<path d="M1470.4,928.8 L1468.0,923.9 L1476.1,919.0 L1482.6,911.7 L1477.7,897.9 L1476.1,889.8 L1472.8,880.0" fill="none" stroke="#a3a3a3" stroke-width="1.45" stroke-linejoin="round"/>
<path d="M1413.5,923.9 L1408.6,932.0 L1402.9,943.4 L1407.8,949.9 L1410.2,958.0 L1411.1,964.6 L1414.3,970.2" fill="none" stroke="#a3a3a3" stroke-width="1.45" stroke-linejoin="round"/>
<path d="M1470.4,928.8 L1464.7,933.7 L1463.1,938.5 L1469.6,945.0 L1476.1,948.3 L1482.6,954.0 L1485.9,959.7 L1492.4,962.9 L1495.6,971.1 L1494.0,977.6" fill="none" stroke="#a3a3a3" stroke-width="1.45" stroke-linejoin="round"/>
<path d="M1466.3,990.6 L1470.4,985.7 L1476.1,984.1 L1480.2,981.6 L1482.6,980.0 L1484.2,983.3 L1489.1,981.6 L1490.7,984.1" fill="none" stroke="#a3a3a3" stroke-width="1.45" stroke-linejoin="round"/>
<path d="M1482.8,912.5 L1491.7,913.3 L1498.2,919.0 L1507.2,919.0 L1516.1,915.0 L1517.7,906.8 L1523.4,905.2" fill="none" stroke="#a3a3a3" stroke-width="1.45" stroke-linejoin="round"/>
<path d="M1507.2,919.0 L1504.7,923.1 L1512.0,928.0 L1525.9,928.0 L1522.6,936.9 L1527.5,941.8 L1531.5,943.4" fill="none" stroke="#a3a3a3" stroke-width="1.45" stroke-linejoin="round"/>
<path d="M1424.6,1070.3 L1422.8,1078.3 L1424.6,1085.5 L1422.0,1089.9 L1427.3,1090.8 L1429.1,1099.7 L1426.4,1110.4 L1427.3,1117.5" fill="none" stroke="#a3a3a3" stroke-width="1.45" stroke-linejoin="round"/>
<path d="M1218.4,647.7 L1227.3,650.3 L1234.5,649.4 L1243.4,644.1 L1257.7,635.1 L1261.3,639.6 L1273.8,644.1 L1281.0,650.3 L1272.1,653.0 L1275.6,660.2 L1284.6,664.7 L1291.7,667.3 L1298.9,671.8 L1300.7,678.1" fill="none" stroke="#a3a3a3" stroke-width="1.45" stroke-linejoin="round"/>
<path d="M1209.4,660.2 L1214.8,670.9 L1217.5,678.1 L1227.3,677.2" fill="none" stroke="#a3a3a3" stroke-width="1.45" stroke-linejoin="round"/>
<path d="M1066.3,880.0 L1064.4,883.9 L1067.3,889.8 L1070.2,896.1 L1065.4,898.0 L1063.9,904.9 L1057.6,907.3 L1057.6,917.1 L1060.0,923.4 L1067.3,925.4 L1067.8,927.8" fill="none" stroke="#a3a3a3" stroke-width="1.45" stroke-linejoin="round"/>
<path d="M1067.3,927.3 L1062.0,928.3 L1059.5,935.6 L1057.6,939.5 L1054.1,939.0 L1052.2,948.3 L1054.1,950.2 L1053.2,952.2 L1045.9,952.7 L1042.4,950.7 L1040.5,940.0 L1038.5,940.5 L1034.1,946.3 L1031.2,944.9 L1029.3,942.4 L1020.0,940.0 L1018.0,943.4 L1013.7,945.9 L1007.3,943.4" fill="none" stroke="#a3a3a3" stroke-width="1.45" stroke-linejoin="round"/>
<path d="M1067.8,927.8 L1071.2,935.1 L1077.1,940.5 L1079.5,946.3 L1082.4,945.9 L1085.9,938.5 L1087.8,936.1 L1090.7,936.6 L1094.6,944.4 L1097.6,946.8 L1103.4,944.9 L1107.3,943.9 L1117.1,942.4" fill="none" stroke="#a3a3a3" stroke-width="1.45" stroke-linejoin="round"/>
<path d="M1003.9,899.5 L1000.0,905.4 L1001.0,912.2 L1002.9,919.0 L1011.2,920.0 L1009.8,922.9 L1014.1,925.4 L1009.3,927.8 L1008.3,931.7 L1004.4,932.2 L1006.3,938.5 L1007.8,942.4 L1007.3,943.4 L1012.2,948.3 L1009.3,955.1 L1014.1,956.6 L1013.7,978.5" fill="none" stroke="#a3a3a3" stroke-width="1.45" stroke-linejoin="round"/>
<path d="M1000.0,968.8 L1012.7,969.8" fill="none" stroke="#a3a3a3" stroke-width="1.45" stroke-linejoin="round"/>
<path d="M1068.3,995.1 L1070.2,985.9 L1077.1,988.3 L1082.9,990.2 L1089.8,989.8 L1092.7,991.2 L1097.6,994.1 L1100.5,997.1" fill="none" stroke="#a3a3a3" stroke-width="1.45" stroke-linejoin="round"/>
</g>
<path d="M969.2,518.5 L971.6,508.8 L974.1,503.1 L983.8,501.5 L993.6,499.0 L1000.1,495.0 L998.5,490.9 L1003.3,488.9 L1008.2,494.1 L1011.5,490.9 L1013.1,495.0 L1013.9,489.3 L1021.2,484.4 L1027.7,482.8 L1034.2,480.3 L1042.4,477.6 L1048.9,481.1 L1055.4,487.6 L1059.4,490.1 L1061.1,490.6 L1072.5,482.8 L1088.8,476.3 L1101.8,475.4 L1111.5,469.8 L1116.4,471.4 L1114.8,466.5 L1119.7,462.4 L1125.4,461.6 L1121.3,467.3 L1124.6,469.8 L1131.1,467.3 L1137.6,464.9 L1140.8,460.0 L1138.5,460.2 L1141.8,459.3 L1148.3,464.2 L1153.2,469.1 L1167.8,467.5 L1172.7,462.6 L1177.6,465.9 L1184.1,472.4 L1193.8,480.5 L1203.6,487.0 L1218.2,488.3 L1218.2,490.2 L1203.6,490.2 L1192.2,483.7 L1182.4,475.6 L1175.9,469.1 L1171.1,467.5 L1167.8,471.5 L1156.4,472.4 L1144.1,474.6 L1131.1,475.4 L1122.9,479.5 L1118.0,489.3 L1111.5,494.1 L1105.9,495.8 L1104.2,499.8 L1108.3,505.5 L1109.9,496.6 L1110.2,488.5 L1105.0,484.4 L1095.3,482.8 L1080.7,484.4 L1064.4,491.2 L1063.5,492.5 L1057.0,499.0 L1050.5,507.2 L1048.9,515.3 L1054.6,525.0 L1050.5,534.8 L1051.3,544.6 L1059.4,553.5 L1058.6,560.8 L1052.1,568.1 L1048.0,576.3 L1055.4,577.1 L1065.1,570.6 L1071.3,573.8 L1072.1,583.1 L1067.7,592.0 L1068.5,599.2 L1078.5,605.5 L1079.3,613.5 L1070.3,617.1 L1065.9,609.9 L1062.4,599.2 L1065.0,592.0 L1056.0,588.5 L1046.3,583.1 L1047.2,588.5 L1042.4,595.0 L1045.6,595.8 L1040.7,598.2 L1037.5,603.1 L1037.5,607.2 L1031.0,608.0 L1031.0,593.3 L1034.2,586.8 L1039.1,578.7 L1039.9,573.8 L1045.6,572.2 L1048.9,567.3 L1042.4,555.9 L1039.1,546.2 L1032.6,541.3 L1028.5,545.4 L1021.2,541.3 L1016.3,542.9 L1009.8,547.8 L1003.3,553.5 L1001.7,559.2 L998.5,565.7 L1003.3,567.3 L1008.2,565.7 L1011.5,568.1 L1009.8,571.4 L1005.0,570.6 L1000.1,568.9 L993.6,572.2 L988.7,580.3 L982.2,586.8 L976.5,590.1 L977.3,595.0 L983.8,603.1 L987.1,608.0 L982.2,616.1 L980.6,629.1 L970.8,631.5 L966.7,627.5 L965.9,620.2 L961.1,622.6 L957.8,623.4 L952.9,628.3 L958.6,621.8 L964.3,620.2 L962.7,614.5 L958.6,606.3 L957.8,601.5 L953.7,600.7 L956.2,607.2 L950.5,612.8 L946.4,612.0 L918.8,601.5 L917.2,597.4 L909.8,595.0 L909.0,590.9 L902.5,586.0 L905.8,580.3 L904.1,577.1 L907.4,566.5 L910.7,567.3 L912.3,548.6 L919.6,555.1 L922.0,564.1 L926.9,572.2 L934.2,575.4 L935.0,573.0 L939.9,569.8 L946.4,570.6 L945.6,564.1 L949.7,557.6 L944.8,547.8 L954.6,539.7 L961.1,539.7 L965.9,529.9 L969.2,525.0Z" fill="#bee8ff" stroke="#a9a9a9" stroke-width="1.3" stroke-linejoin="round"/>
<path d="M893.3,641.8 L896.8,641.8 L899.5,650.7 L905.8,659.7 L912.0,665.0 L911.1,670.4 L918.3,672.2 L914.7,678.5 L908.5,680.3 L909.4,673.1 L902.2,666.8 L893.3,669.5 L892.4,656.1Z" fill="#bee8ff" stroke="#a9a9a9" stroke-width="1.3" stroke-linejoin="round"/>
<path d="M892.4,727.7 L906.7,734.8 L917.4,743.8 L919.2,761.6 L925.5,770.6 L929.0,779.5 L927.2,784.9 L920.1,793.8 L912.0,801.9 L910.3,795.6 L912.9,791.2 L907.6,786.7 L904.0,792.1 L900.4,799.2 L896.8,793.8 L895.0,776.0 L891.5,759.9 L889.7,747.3Z" fill="#bee8ff" stroke="#a9a9a9" stroke-width="1.3" stroke-linejoin="round"/>
<path d="M1145.7,583.9 L1153.8,581.6 L1165.2,577.7 L1175.0,572.8 L1183.1,569.6 L1188.0,566.3 L1192.8,563.1 L1201.0,569.3 L1204.6,571.2 L1203.6,572.5 L1200.0,570.6 L1193.2,565.0 L1189.3,568.0 L1183.7,571.1 L1175.6,574.3 L1168.5,579.3 L1160.3,583.1 L1145.7,585.4Z" fill="#bee8ff" stroke="#a9a9a9" stroke-width="1.3" stroke-linejoin="round"/>
<path d="M1218.0,592.5 L1212.4,599.8 L1207.5,608.0 L1206.7,616.1 L1207.5,629.1 L1209.9,629.1 L1209.1,616.1 L1210.4,608.8 L1214.8,601.5 L1219.7,595.0Z" fill="#bee8ff" stroke="#a9a9a9" stroke-width="1.3" stroke-linejoin="round"/>
<path d="M1481.0,760.2 L1485.5,767.3 L1489.1,774.5 L1489.9,785.2 L1490.8,796.0 L1494.4,806.7 L1497.1,815.6 L1496.2,828.2 L1497.1,840.7 L1494.4,842.5 L1492.6,828.2 L1492.6,815.6 L1489.9,808.5 L1487.3,797.7 L1486.4,785.2 L1485.5,776.3 L1481.9,769.1 L1478.3,762.9Z" fill="#bee8ff" stroke="#a9a9a9" stroke-width="1.3" stroke-linejoin="round"/>
<path d="M1006.6,501.5 L1011.5,502.3 L1012.3,510.4 L1010.7,513.7 L1008.2,525.0 L1005.0,538.0 L1005.8,544.6 L1000.1,551.1 L1003.3,552.7 L998.5,559.2 L990.3,567.3 L988.7,572.2 L970.8,577.1 L968.4,571.4 L964.3,564.1 L961.9,560.8 L957.8,563.3 L962.7,568.1 L958.6,568.9 L954.6,564.9 L952.1,559.2 L956.2,555.9 L955.4,549.4 L961.1,544.6 L970.0,541.3 L973.3,538.0 L967.6,534.8 L966.7,531.5 L971.6,525.0 L970.0,518.5 L983.8,517.7 L993.6,516.9 L1001.7,513.7 L1002.5,503.9Z" fill="#fff" stroke="#a9a9a9" stroke-width="1.3" stroke-linejoin="round"/>
<path d="M1017.2,534.0 L1026.1,530.7 L1033.4,531.5 L1035.0,534.8 L1030.2,537.2 L1026.1,542.9 L1022.0,538.0Z" fill="#fff" stroke="#a9a9a9" stroke-width="1.3" stroke-linejoin="round"/>
<path d="M1034.2,516.1 L1036.7,514.5 L1039.1,517.7 L1036.7,520.2Z" fill="#fff" stroke="#a9a9a9" stroke-width="1.3" stroke-linejoin="round"/>
<path d="M969.2,601.7 L973.6,601.3 L970.1,606.2 L968.7,616.9 L967.1,617.4 L966.0,610.7Z" fill="#fff" stroke="#a9a9a9" stroke-width="1.3" stroke-linejoin="round"/>
<path d="M962.5,579.8 L970.1,579.4 L968.7,588.7 L964.2,585.6Z" fill="#fff" stroke="#a9a9a9" stroke-width="1.3" stroke-linejoin="round"/>
<path d="M958.0,564.2 L961.6,563.4 L962.0,566.8 L958.9,568.2Z" fill="#fff" stroke="#a9a9a9" stroke-width="1.3" stroke-linejoin="round"/>
<path d="M934.3,576.7 L938.3,576.0 L942.8,574.7 L946.4,576.0 L949.0,578.6 L952.6,577.7 L956.2,576.0 L961.1,573.8 L959.9,580.3 L961.6,582.0 L964.1,583.8 L962.9,590.1 L962.5,595.9 L953.7,596.9 L954.6,599.2 L956.4,601.7 L957.1,602.6 L953.7,601.4 L951.9,598.1 L949.2,591.0 L947.4,587.4 L941.2,582.0 L936.7,578.0Z" fill="#fff" stroke="#a9a9a9" stroke-width="1.3" stroke-linejoin="round"/>
<path d="M1144.2,469.1 L1149.9,467.5 L1152.4,469.9 L1147.5,472.4Z" fill="#fff" stroke="#a9a9a9" stroke-width="1.3" stroke-linejoin="round"/>
<path d="M920.4,906.7 L923.7,904.2 L926.9,902.6 L931.0,904.2 L932.6,908.3 L931.8,912.4 L935.0,914.8 L937.5,913.2 L939.9,917.2 L939.1,922.9 L941.5,928.6 L944.0,933.5 L950.5,935.9 L951.3,938.4 L941.5,938.4 L936.7,935.1 L933.4,928.6 L929.3,919.7 L925.3,913.2Z" fill="#fff" stroke="#a9a9a9" stroke-width="1.3" stroke-linejoin="round"/>
<path d="M950.8,954.6 L953.7,952.2 L964.3,949.3 L959.4,955.4 L955.4,958.7 L952.1,957.9Z" fill="#fff" stroke="#a9a9a9" stroke-width="1.3" stroke-linejoin="round"/>
<path d="M944.0,982.3 L946.4,975.0 L949.7,973.3 L960.2,979.0 L957.8,984.7 L955.4,990.4 L954.6,998.5 L956.2,1008.3 L951.3,1013.2 L947.2,1015.6 L942.4,1009.1 L939.9,1004.2 L941.5,996.1 L942.4,987.2Z" fill="#fff" stroke="#a9a9a9" stroke-width="1.3" stroke-linejoin="round"/>
<path d="M1297.7,412.1 L1302.1,408.5 L1307.5,403.1 L1314.7,401.3 L1332.6,401.3 L1339.7,396.0 L1346.9,395.1 L1347.8,403.1 L1344.2,401.3 L1339.7,403.1 L1332.6,412.1 L1325.4,421.0 L1320.0,424.6 L1314.7,423.7 L1309.3,419.2 L1303.9,418.3 L1299.5,415.6Z" fill="#fff" stroke="#a9a9a9" stroke-width="1.3" stroke-linejoin="round"/>
<path d="M1400.0,557.0 L1412.0,551.0 L1420.0,552.0 L1412.0,560.0 L1403.0,564.0Z" fill="#fff" stroke="#a9a9a9" stroke-width="1.3" stroke-linejoin="round"/>
<path d="M1128.5,1023.1 L1130.1,1019.8 L1128.5,1017.4 L1133.3,1011.7 L1139.8,1008.5 L1146.3,1010.1 L1156.1,1015.0 L1164.2,1021.5 L1172.4,1027.2 L1178.9,1033.7 L1183.7,1041.8 L1187.0,1049.9 L1190.2,1058.0 L1191.9,1063.7 L1183.7,1066.2 L1179.7,1069.4 L1172.4,1063.7 L1168.3,1060.5 L1170.7,1067.0 L1176.4,1071.1 L1169.1,1074.3 L1162.6,1076.3 L1156.1,1074.3 L1149.6,1071.1 L1145.5,1061.3 L1143.9,1049.9 L1142.3,1042.6 L1140.7,1036.9 L1135.0,1032.8 L1130.1,1028.8Z" fill="#fff" stroke="#a9a9a9" stroke-width="1.3" stroke-linejoin="round"/>
<path d="M1108.9,996.3 L1112.2,995.4 L1113.0,999.5 L1109.8,1000.3Z" fill="#fff" stroke="#a9a9a9" stroke-width="1.3" stroke-linejoin="round"/>
<path d="M1211.4,1038.3 L1214.2,1037.7 L1217.1,1042.8 L1221.6,1046.3 L1228.5,1051.9 L1234.1,1056.5 L1239.8,1059.9 L1243.8,1054.8 L1246.7,1062.2 L1250.1,1064.5 L1255.8,1061.1 L1259.2,1064.5 L1264.3,1070.2 L1256.9,1072.4 L1250.1,1073.6 L1246.1,1078.7 L1239.8,1073.6 L1234.1,1067.9 L1227.3,1059.9 L1219.3,1051.9 L1214.8,1045.1Z" fill="#fff" stroke="#a9a9a9" stroke-width="1.3" stroke-linejoin="round"/>
<path d="M1325.2,982.5 L1328.0,984.2 L1326.9,992.8 L1325.2,1004.1 L1322.9,1015.5 L1319.5,1025.8 L1315.0,1033.7 L1311.5,1044.0 L1308.1,1054.2 L1304.7,1066.7 L1301.3,1078.1 L1297.9,1089.5 L1295.6,1098.6 L1291.1,1103.2 L1287.6,1100.9 L1285.4,1095.2 L1286.5,1090.6 L1284.8,1082.7 L1279.7,1078.1 L1275.1,1073.6 L1272.8,1071.3 L1279.7,1073.6 L1284.2,1067.9 L1286.5,1061.1 L1291.1,1062.2 L1294.5,1059.9 L1291.1,1054.2 L1286.5,1051.9 L1289.9,1045.1 L1296.7,1036.0 L1302.4,1032.0 L1309.3,1020.1 L1312.7,1009.8 L1316.1,999.6 L1319.5,990.5Z" fill="#fff" stroke="#a9a9a9" stroke-width="1.3" stroke-linejoin="round"/>
<path d="M1261.6,756.3 L1258.3,759.6 L1255.7,764.8 L1257.0,771.3 L1262.2,775.2 L1266.2,779.2 L1268.8,784.4 L1266.2,789.6 L1262.2,793.5 L1258.3,797.4 L1258.3,813.1 L1260.3,819.0 L1272.7,820.3 L1274.6,813.1 L1276.6,801.4 L1279.9,792.2 L1279.9,788.3 L1275.3,789.6 L1271.4,785.7 L1276.0,779.2 L1271.4,777.9 L1267.5,772.6 L1264.2,766.1 L1262.2,759.6Z" fill="#fff" stroke="#a9a9a9" stroke-width="1.3" stroke-linejoin="round"/>
<path d="M1212.9,824.6 L1219.8,821.7 L1223.7,813.9 L1227.6,818.8 L1226.6,827.6 L1222.7,828.0 L1216.8,825.6Z" fill="#fff" stroke="#a9a9a9" stroke-width="1.3" stroke-linejoin="round"/>
<path d="M1184.1,794.4 L1187.6,793.4 L1193.4,793.9 L1194.9,796.3 L1191.5,798.3 L1186.6,798.3 L1183.7,796.8Z" fill="#fff" stroke="#a9a9a9" stroke-width="1.3" stroke-linejoin="round"/>
<path d="M1202.2,799.3 L1206.6,799.8 L1206.1,801.7 L1202.7,801.4Z" fill="#fff" stroke="#a9a9a9" stroke-width="1.3" stroke-linejoin="round"/>
<path d="M1238.2,768.6 L1246.2,769.5 L1243.5,772.2Z" fill="#fff" stroke="#a9a9a9" stroke-width="1.3" stroke-linejoin="round"/>
<path d="M1340.6,777.2 L1345.0,777.2 L1355.8,785.2 L1362.9,792.4 L1358.5,791.5 L1348.6,785.2 L1342.4,780.8Z" fill="#fff" stroke="#a9a9a9" stroke-width="1.3" stroke-linejoin="round"/>
<path d="M1372.8,810.3 L1375.5,812.1 L1377.2,817.4 L1374.6,815.6Z" fill="#fff" stroke="#a9a9a9" stroke-width="1.3" stroke-linejoin="round"/>
<path d="M1296.2,719.2 L1298.9,718.3 L1298.0,720.5Z" fill="#fff" stroke="#a9a9a9" stroke-width="1.3" stroke-linejoin="round"/>
<path d="M1266.0,1025.8 L1279.7,1015.0 L1282.5,1018.9 L1281.9,1024.6 L1279.7,1029.2 L1284.2,1032.0 L1281.9,1037.2 L1275.1,1041.7 L1272.8,1049.7 L1268.3,1048.5 L1259.2,1047.4 L1253.5,1040.6 L1254.6,1031.5Z" fill="#fff" stroke="#a9a9a9" stroke-width="1.3" stroke-linejoin="round"/>
<path d="M1274.0,1050.8 L1278.0,1050.2 L1278.5,1055.4 L1275.7,1058.2Z" fill="#fff" stroke="#a9a9a9" stroke-width="1.3" stroke-linejoin="round"/>
<path d="M1284.2,1030.3 L1287.6,1029.2 L1287.1,1034.9 L1283.7,1035.4Z" fill="#fff" stroke="#a9a9a9" stroke-width="1.3" stroke-linejoin="round"/>
<path d="M1236.4,1034.9 L1243.3,1036.0 L1247.8,1037.2 L1244.4,1038.3Z" fill="#fff" stroke="#a9a9a9" stroke-width="1.3" stroke-linejoin="round"/>
<path d="M1227.3,1025.2 L1231.9,1024.6 L1232.4,1028.0Z" fill="#fff" stroke="#a9a9a9" stroke-width="1.3" stroke-linejoin="round"/>
<path d="M1281.4,1015.0 L1290.5,1013.3 L1291.6,1018.4 L1283.1,1019.5Z" fill="#fff" stroke="#a9a9a9" stroke-width="1.3" stroke-linejoin="round"/>
<path d="M1175.9,983.4 L1179.4,981.6 L1186.6,992.4 L1181.2,996.9 L1175.9,993.3 L1178.6,988.8Z" fill="#fff" stroke="#a9a9a9" stroke-width="1.3" stroke-linejoin="round"/>
<path d="M1146.5,942.4 L1151.4,941.6 L1152.2,948.9 L1148.1,949.8Z" fill="#fff" stroke="#a9a9a9" stroke-width="1.3" stroke-linejoin="round"/>
<path d="M1137.6,957.1 L1141.6,956.3 L1140.8,962.0 L1138.4,962.0Z" fill="#fff" stroke="#a9a9a9" stroke-width="1.3" stroke-linejoin="round"/>
<path d="M1131.9,931.9 L1135.1,932.7 L1133.5,935.1Z" fill="#fff" stroke="#a9a9a9" stroke-width="1.3" stroke-linejoin="round"/>
<path d="M1109.1,996.1 L1112.4,995.3 L1112.4,1000.2 L1109.9,1001.0Z" fill="#fff" stroke="#a9a9a9" stroke-width="1.3" stroke-linejoin="round"/>
<path d="M1128.6,896.1 L1132.7,895.3 L1133.5,900.5 L1130.2,901.0Z" fill="#fff" stroke="#a9a9a9" stroke-width="1.3" stroke-linejoin="round"/>
<path d="M1203.3,854.5 L1206.9,856.3 L1205.1,859.0Z" fill="#fff" stroke="#a9a9a9" stroke-width="1.3" stroke-linejoin="round"/>
<path d="M1450.6,808.5 L1456.0,803.1 L1459.5,808.5 L1457.7,815.6 L1453.3,817.4Z" fill="#fff" stroke="#a9a9a9" stroke-width="1.3" stroke-linejoin="round"/>
<path d="M1600.9,833.5 L1604.4,838.9 L1606.2,847.8 L1602.6,851.4 L1598.2,844.3 L1597.3,837.1Z" fill="#fff" stroke="#a9a9a9" stroke-width="1.3" stroke-linejoin="round"/>
<path d="M1361.1,958.4 L1364.7,960.2 L1367.4,972.7 L1362.9,970.9Z" fill="#fff" stroke="#a9a9a9" stroke-width="1.3" stroke-linejoin="round"/>
<path d="M1355.8,981.6 L1362.9,978.1 L1359.4,987.0Z" fill="#fff" stroke="#a9a9a9" stroke-width="1.3" stroke-linejoin="round"/>
<path d="M1492.3,1038.3 L1499.4,1036.5 L1506.5,1038.3 L1504.7,1044.5 L1495.8,1043.6Z" fill="#fff" stroke="#a9a9a9" stroke-width="1.3" stroke-linejoin="round"/>
<path d="M1394.4,1038.3 L1401.5,1032.9 L1407.7,1034.7 L1409.5,1038.3 L1402.4,1040.9 L1398.8,1045.4Z" fill="#fff" stroke="#a9a9a9" stroke-width="1.3" stroke-linejoin="round"/>
<path d="M1413.9,1029.4 L1419.3,1026.7 L1424.6,1028.5 L1424.6,1032.9 L1421.1,1037.4Z" fill="#fff" stroke="#a9a9a9" stroke-width="1.3" stroke-linejoin="round"/>
<path d="M1389.0,1016.9 L1394.4,1013.4 L1393.5,1016.9Z" fill="#fff" stroke="#a9a9a9" stroke-width="1.3" stroke-linejoin="round"/>
<path d="M1411.3,1053.4 L1414.8,1051.6 L1418.4,1055.2 L1412.2,1055.5Z" fill="#fff" stroke="#a9a9a9" stroke-width="1.3" stroke-linejoin="round"/>
<path d="M1520.8,1006.2 L1526.1,1003.6 L1527.9,1008.0 L1523.4,1009.8Z" fill="#fff" stroke="#a9a9a9" stroke-width="1.3" stroke-linejoin="round"/>
<path d="M1143.9,1034.5 L1149.6,1033.7 L1154.5,1036.9 L1153.7,1041.8 L1149.6,1040.2 L1145.5,1036.9Z" fill="#bee8ff" stroke="#a9a9a9" stroke-width="1.3" stroke-linejoin="round"/>
<path d="M1535.6,1023.9 L1547.0,1022.8 L1539.7,1026.3 L1536.4,1029.6 L1534.0,1028.8Z" fill="#bee8ff" stroke="#a9a9a9" stroke-width="1.3" stroke-linejoin="round"/>
<path d="M1323.2,380.2 L1327.3,392.4 L1340.2,392.6 L1329.9,400.3 L1333.7,412.6 L1323.2,405.1 L1312.7,412.6 L1316.5,400.3 L1306.2,392.6 L1319.1,392.4Z" fill="#4c7300" stroke="#000" stroke-width="1.7" stroke-linejoin="miter"/>
<path d="M1000.5,503.5 L1004.6,515.7 L1017.5,515.9 L1007.2,523.6 L1011.0,535.9 L1000.5,528.4 L990.0,535.9 L993.8,523.6 L983.5,515.9 L996.4,515.7Z" fill="#4c7300" stroke="#000" stroke-width="1.7" stroke-linejoin="miter"/>
<path d="M1220.5,550.5 L1224.6,562.7 L1237.5,562.9 L1227.2,570.6 L1231.0,582.9 L1220.5,575.4 L1210.0,582.9 L1213.8,570.6 L1203.5,562.9 L1216.4,562.7Z" fill="#4c7300" stroke="#000" stroke-width="1.7" stroke-linejoin="miter"/>
<path d="M1243.1,690.8 L1247.2,703.0 L1260.1,703.2 L1249.8,710.9 L1253.6,723.2 L1243.1,715.7 L1232.6,723.2 L1236.4,710.9 L1226.1,703.2 L1239.0,703.0Z" fill="#4c7300" stroke="#000" stroke-width="1.7" stroke-linejoin="miter"/>
<path d="M1249.5,665.7 L1253.6,677.9 L1266.5,678.1 L1256.2,685.8 L1260.0,698.1 L1249.5,690.6 L1239.0,698.1 L1242.8,685.8 L1232.5,678.1 L1245.4,677.9Z" fill="#4c7300" stroke="#000" stroke-width="1.7" stroke-linejoin="miter"/>
<path d="M1263.3,681.7 L1267.4,693.9 L1280.3,694.1 L1270.0,701.8 L1273.8,714.1 L1263.3,706.6 L1252.8,714.1 L1256.6,701.8 L1246.3,694.1 L1259.2,693.9Z" fill="#4c7300" stroke="#000" stroke-width="1.7" stroke-linejoin="miter"/>
<path d="M1220.5,681.0 L1224.6,693.2 L1237.5,693.4 L1227.2,701.1 L1231.0,713.4 L1220.5,705.9 L1210.0,713.4 L1213.8,701.1 L1203.5,693.4 L1216.4,693.2Z" fill="#4c7300" stroke="#000" stroke-width="1.7" stroke-linejoin="miter"/>
<path d="M1213.4,768.1 L1217.5,780.3 L1230.4,780.5 L1220.1,788.2 L1223.9,800.5 L1213.4,793.0 L1202.9,800.5 L1206.7,788.2 L1196.4,780.5 L1209.3,780.3Z" fill="#4c7300" stroke="#000" stroke-width="1.7" stroke-linejoin="miter"/>
<path d="M1375.1,745.4 L1379.2,757.6 L1392.1,757.8 L1381.8,765.5 L1385.6,777.8 L1375.1,770.3 L1364.6,777.8 L1368.4,765.5 L1358.1,757.8 L1371.0,757.6Z" fill="#4c7300" stroke="#000" stroke-width="1.7" stroke-linejoin="miter"/>
<path d="M1431.4,765.0 L1435.5,777.2 L1448.4,777.4 L1438.1,785.1 L1441.9,797.4 L1431.4,789.9 L1420.9,797.4 L1424.7,785.1 L1414.4,777.4 L1427.3,777.2Z" fill="#4c7300" stroke="#000" stroke-width="1.7" stroke-linejoin="miter"/>
<path d="M1467.2,753.4 L1471.3,765.6 L1484.2,765.8 L1473.9,773.5 L1477.7,785.8 L1467.2,778.3 L1456.7,785.8 L1460.5,773.5 L1450.2,765.8 L1463.1,765.6Z" fill="#4c7300" stroke="#000" stroke-width="1.7" stroke-linejoin="miter"/>
<path d="M1572.9,715.5 L1577.0,727.7 L1589.9,727.9 L1579.6,735.6 L1583.4,747.9 L1572.9,740.4 L1562.4,747.9 L1566.2,735.6 L1555.9,727.9 L1568.8,727.7Z" fill="#4c7300" stroke="#000" stroke-width="1.7" stroke-linejoin="miter"/>
<path d="M1566.5,713.2 L1570.6,725.4 L1583.5,725.6 L1573.2,733.3 L1577.0,745.6 L1566.5,738.1 L1556.0,745.6 L1559.8,733.3 L1549.5,725.6 L1562.4,725.4Z" fill="#4c7300" stroke="#000" stroke-width="1.7" stroke-linejoin="miter"/>
<path d="M1481.5,810.7 L1485.6,822.9 L1498.5,823.1 L1488.2,830.8 L1492.0,843.1 L1481.5,835.6 L1471.0,843.1 L1474.8,830.8 L1464.5,823.1 L1477.4,822.9Z" fill="#4c7300" stroke="#000" stroke-width="1.7" stroke-linejoin="miter"/>
<path d="M1499.4,803.5 L1503.5,815.7 L1516.4,815.9 L1506.1,823.6 L1509.9,835.9 L1499.4,828.4 L1488.9,835.9 L1492.7,823.6 L1482.4,815.9 L1495.3,815.7Z" fill="#4c7300" stroke="#000" stroke-width="1.7" stroke-linejoin="miter"/>
<path d="M1562.0,833.9 L1566.1,846.1 L1579.0,846.3 L1568.7,854.0 L1572.5,866.3 L1562.0,858.8 L1551.5,866.3 L1555.3,854.0 L1545.0,846.3 L1557.9,846.1Z" fill="#4c7300" stroke="#000" stroke-width="1.7" stroke-linejoin="miter"/>
<path d="M1340.9,826.1 L1345.0,838.3 L1357.9,838.5 L1347.6,846.2 L1351.4,858.5 L1340.9,851.0 L1330.4,858.5 L1334.2,846.2 L1323.9,838.5 L1336.8,838.3Z" fill="#4c7300" stroke="#000" stroke-width="1.7" stroke-linejoin="miter"/>
<path d="M1273.7,871.0 L1277.8,883.2 L1290.7,883.4 L1280.4,891.1 L1284.2,903.4 L1273.7,895.9 L1263.2,903.4 L1267.0,891.1 L1256.7,883.4 L1269.6,883.2Z" fill="#4c7300" stroke="#000" stroke-width="1.7" stroke-linejoin="miter"/>
<path d="M1117.1,873.5 L1121.2,885.7 L1134.1,885.9 L1123.8,893.6 L1127.6,905.9 L1117.1,898.4 L1106.6,905.9 L1110.4,893.6 L1100.1,885.9 L1113.0,885.7Z" fill="#4c7300" stroke="#000" stroke-width="1.7" stroke-linejoin="miter"/>
<path d="M1142.9,890.5 L1147.0,902.7 L1159.9,902.9 L1149.6,910.6 L1153.4,922.9 L1142.9,915.4 L1132.4,922.9 L1136.2,910.6 L1125.9,902.9 L1138.8,902.7Z" fill="#4c7300" stroke="#000" stroke-width="1.7" stroke-linejoin="miter"/>
<path d="M1119.0,912.2 L1123.1,924.4 L1136.0,924.6 L1125.7,932.3 L1129.5,944.6 L1119.0,937.1 L1108.5,944.6 L1112.3,932.3 L1102.0,924.6 L1114.9,924.4Z" fill="#4c7300" stroke="#000" stroke-width="1.7" stroke-linejoin="miter"/>
<path d="M1300.1,929.2 L1304.2,941.4 L1317.1,941.6 L1306.8,949.3 L1310.6,961.6 L1300.1,954.1 L1289.6,961.6 L1293.4,949.3 L1283.1,941.6 L1296.0,941.4Z" fill="#4c7300" stroke="#000" stroke-width="1.7" stroke-linejoin="miter"/>
<path d="M1352.5,909.8 L1356.6,922.0 L1369.5,922.2 L1359.2,929.9 L1363.0,942.2 L1352.5,934.7 L1342.0,942.2 L1345.8,929.9 L1335.5,922.2 L1348.4,922.0Z" fill="#4c7300" stroke="#000" stroke-width="1.7" stroke-linejoin="miter"/>
<path d="M1453.8,964.1 L1457.9,976.3 L1470.8,976.5 L1460.5,984.2 L1464.3,996.5 L1453.8,989.0 L1443.3,996.5 L1447.1,984.2 L1436.8,976.5 L1449.7,976.3Z" fill="#4c7300" stroke="#000" stroke-width="1.7" stroke-linejoin="miter"/>
<path d="M1545.0,936.4 L1549.1,948.6 L1562.0,948.8 L1551.7,956.5 L1555.5,968.8 L1545.0,961.3 L1534.5,968.8 L1538.3,956.5 L1528.0,948.8 L1540.9,948.6Z" fill="#4c7300" stroke="#000" stroke-width="1.7" stroke-linejoin="miter"/>
<path d="M1211.3,996.3 L1215.4,1008.5 L1228.3,1008.7 L1218.0,1016.4 L1221.8,1028.7 L1211.3,1021.2 L1200.8,1028.7 L1204.6,1016.4 L1194.3,1008.7 L1207.2,1008.5Z" fill="#4c7300" stroke="#000" stroke-width="1.7" stroke-linejoin="miter"/>
<path d="M1261.7,1016.0 L1265.8,1028.2 L1278.7,1028.4 L1268.4,1036.1 L1272.2,1048.4 L1261.7,1040.9 L1251.2,1048.4 L1255.0,1036.1 L1244.7,1028.4 L1257.6,1028.2Z" fill="#4c7300" stroke="#000" stroke-width="1.7" stroke-linejoin="miter"/>
<path d="M1152.8,1042.9 L1156.9,1055.1 L1169.8,1055.3 L1159.5,1063.0 L1163.3,1075.3 L1152.8,1067.8 L1142.3,1075.3 L1146.1,1063.0 L1135.8,1055.3 L1148.7,1055.1Z" fill="#4c7300" stroke="#000" stroke-width="1.7" stroke-linejoin="miter"/>
<path d="M1175.9,789.1 L1180.0,801.3 L1192.9,801.5 L1182.6,809.2 L1186.4,821.5 L1175.9,814.0 L1165.4,821.5 L1169.2,809.2 L1158.9,801.5 L1171.8,801.3Z" fill="#98e600" stroke="#000" stroke-width="1.7" stroke-linejoin="miter"/>
<path d="M1129.1,827.4 L1133.2,839.6 L1146.1,839.8 L1135.8,847.5 L1139.6,859.8 L1129.1,852.3 L1118.6,859.8 L1122.4,847.5 L1112.1,839.8 L1125.0,839.6Z" fill="#98e600" stroke="#000" stroke-width="1.7" stroke-linejoin="miter"/>
<path d="M1163.2,944.0 L1167.3,956.2 L1180.2,956.4 L1169.9,964.1 L1173.7,976.4 L1163.2,968.9 L1152.7,976.4 L1156.5,964.1 L1146.2,956.4 L1159.1,956.2Z" fill="#98e600" stroke="#000" stroke-width="1.7" stroke-linejoin="miter"/>
<text x="1323" y="359.3" text-anchor="middle" class="ml">Læsø</text>
<text x="1000" y="481.3" text-anchor="middle" class="ml">Sdr. dråby</text>
<text x="1220" y="530.3" text-anchor="middle" class="ml">Als Odde</text>
<text x="1250.5" y="647.8" text-anchor="middle" class="ml">Rønde</text>
<text x="1244.7" y="667.3" text-anchor="middle" class="ml">Knebelbro</text>
<text x="1213" y="748.0" text-anchor="middle" class="ml">Hou</text>
<text x="1176" y="770.3" text-anchor="middle" class="ml">Bisholt</text>
<text x="1128.7" y="806.5999999999999" text-anchor="middle" class="ml">Sellerup</text>
<text x="1143.3" y="871.0" text-anchor="middle" class="ml">Gamborg Fjord</text>
<text x="1120" y="890.5999999999999" text-anchor="middle" class="ml">Hejlsminde</text>
<text x="1163.3" y="926.3" text-anchor="middle" class="ml">Assens</text>
<text x="1210.8" y="974.9" text-anchor="middle" class="ml">Faaborg</text>
<text x="1261.7" y="997.5999999999999" text-anchor="middle" class="ml">Skovballe</text>
<text x="1152.6" y="1021.3" text-anchor="middle" class="ml">Sønderborg</text>
<text x="1273.4" y="852.0" text-anchor="middle" class="ml">Midskov</text>
<text x="1299.6" y="908.5" text-anchor="middle" class="ml">Nyborg</text>
<text x="1340" y="803.8" text-anchor="middle" class="ml">Kalundborg</text>
<text x="1353" y="890.5999999999999" text-anchor="middle" class="ml">Korsør</text>
<text x="1375" y="722.5" text-anchor="middle" class="ml">Sj. odde</text>
<text x="1466.7" y="733.5" text-anchor="middle" class="ml">Kulhuse</text>
<text x="1481" y="787.6999999999999" text-anchor="middle" class="ml">Gershøj</text>
<text x="1571.3" y="694.3" text-anchor="middle" class="ml">Helsingør</text>
<text x="1561.5" y="814.3" text-anchor="middle" class="ml">Friheden</text>
<text x="1453.3" y="945.3" text-anchor="middle" class="ml">Basnæs</text>
<text x="1545.4" y="914.3" text-anchor="middle" class="ml">Rødvig</text>
<text x="1201.4" y="718.2" text-anchor="middle" class="ms">Aarhus</text>
<text x="1238.1" y="924.8" text-anchor="middle" class="ms">Odense</text></svg><div class="foot" style="left:6px">Aalborg Forsyning</div><div class="foot" style="left:742px">Powered by Esri</div></div>
</body></html>
